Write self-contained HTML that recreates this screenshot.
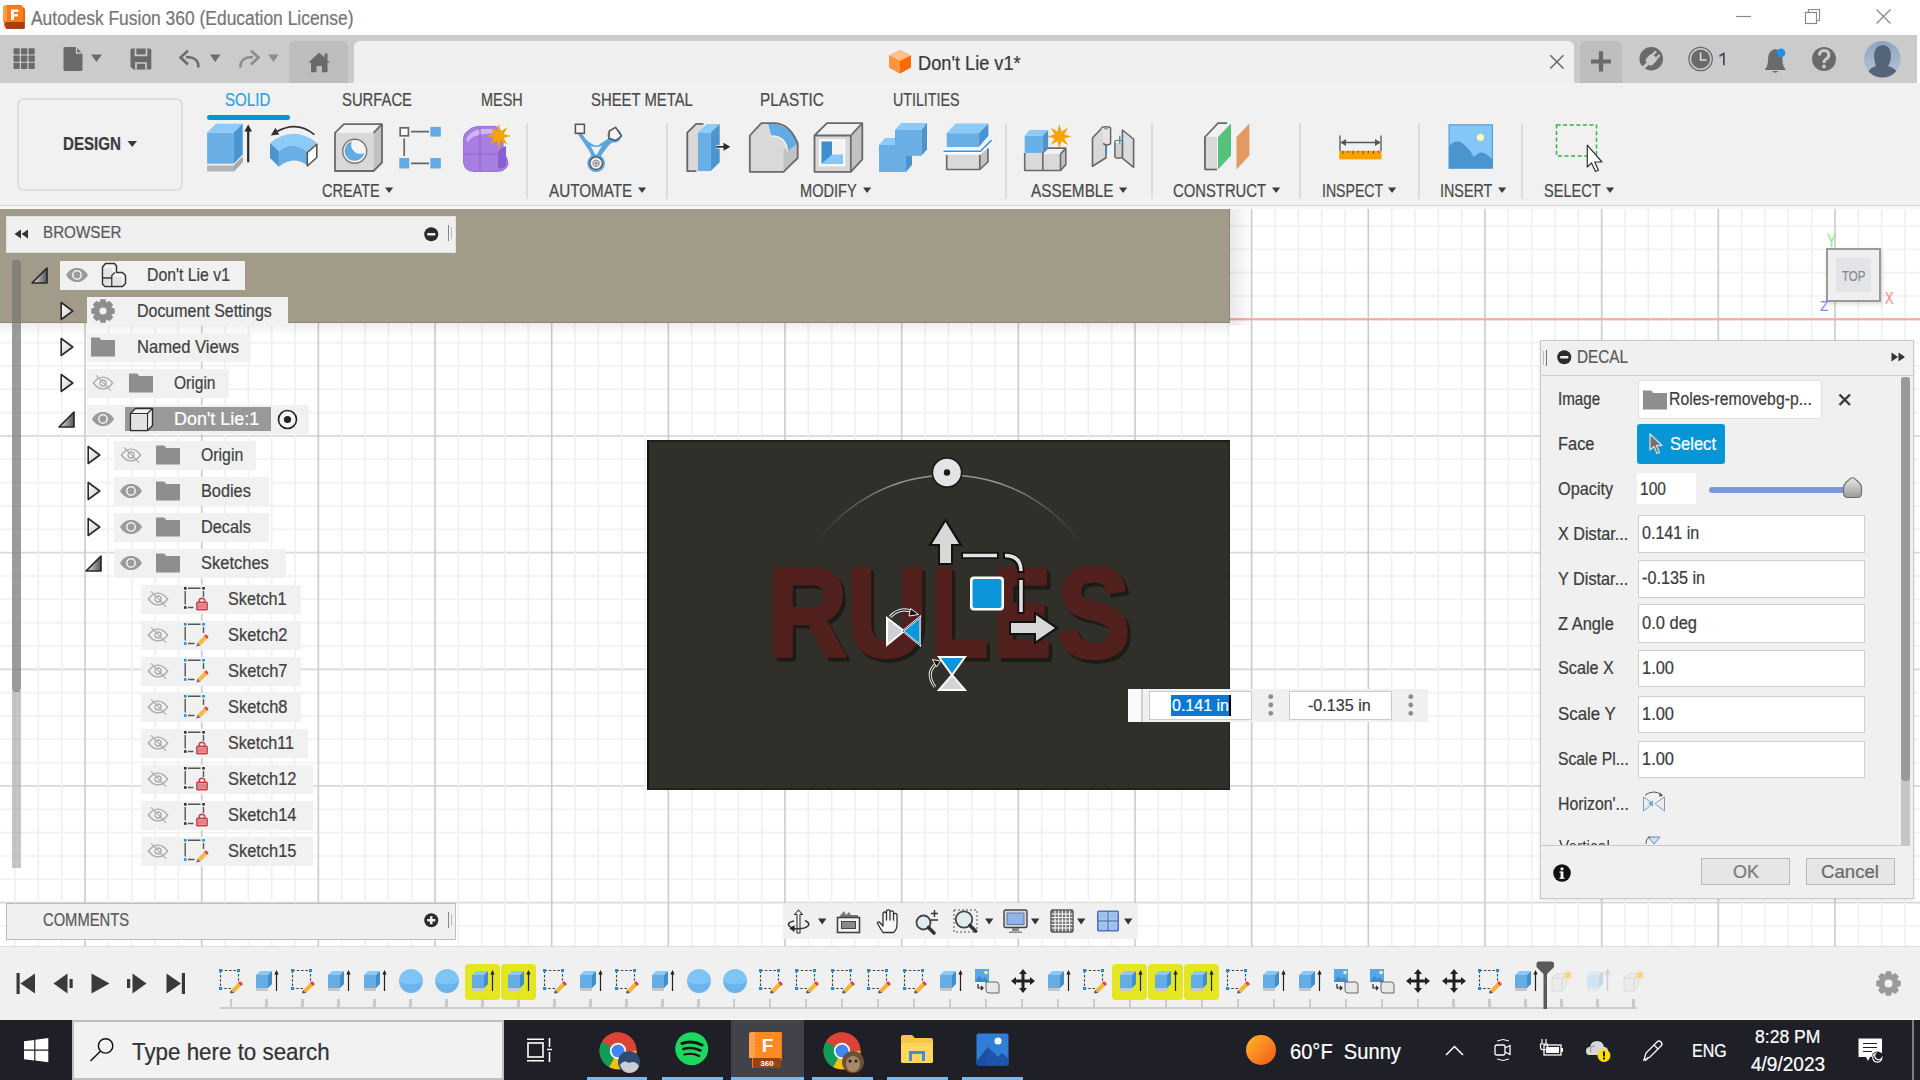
<!DOCTYPE html><html><head><meta charset="utf-8"><style>
html,body{margin:0;padding:0}
body{width:1920px;height:1080px;position:relative;overflow:hidden;background:#fff;font-family:"Liberation Sans",sans-serif}
div{box-sizing:border-box}
svg{overflow:visible}
</style></head><body>
<div style="position:absolute;left:0px;top:0px;width:1920px;height:35px;background:#fff"></div>
<svg style="position:absolute;left:30.50px;top:5.67px;overflow:visible" width="323.5" height="25.1"><text x="0" y="19.331395348837212" font-size="19.331395348837212" fill="#767676" stroke="#767676" stroke-width="0.22" font-weight="400" textLength="322.5" lengthAdjust="spacingAndGlyphs" style="">Autodesk Fusion 360 (Education License)</text></svg>
<svg style="position:absolute;left:1731px;top:10px;" width="30" height="20" viewBox="0 0 30 20"><line x1="5" y1="6.5" x2="20" y2="6.5" stroke="#8a8a8a" stroke-width="1.2"/></svg>
<svg style="position:absolute;left:1800px;top:6px;" width="30" height="25" viewBox="0 0 30 25"><rect x="5.5" y="6.5" width="11" height="11" fill="none" stroke="#8a8a8a" stroke-width="1.2"/><path d="M8.5 6.5V3.5H19.5V14.5H16.5" fill="none" stroke="#8a8a8a" stroke-width="1.2"/></svg>
<svg style="position:absolute;left:1871px;top:6px;" width="30" height="25" viewBox="0 0 30 25"><path d="M5.5 3.5L19.5 17.5M19.5 3.5L5.5 17.5" stroke="#8a8a8a" stroke-width="1.3"/></svg>
<div style="position:absolute;left:0px;top:35px;width:1917px;height:48px;background:#cbcbcb"></div>
<div style="position:absolute;left:1917px;top:35px;width:3px;height:48px;background:#fff"></div>
<div style="position:absolute;left:289px;top:41px;width:59px;height:42px;background:#bdbdbd;border-radius:6px 6px 0 0"></div>
<div style="position:absolute;left:354px;top:41px;width:1220px;height:42px;background:#f0f0f0;border-radius:6px 6px 0 0"></div>
<div style="position:absolute;left:1580px;top:41px;width:42px;height:42px;background:#bdbdbd;border-radius:6px 6px 0 0"></div>
<svg style="position:absolute;left:917.80px;top:49.93px;overflow:visible" width="103.7" height="25.7"><text x="0" y="19.76744186046512" font-size="19.76744186046512" fill="#3a3a3a" stroke="#3a3a3a" stroke-width="0.22" font-weight="400" textLength="102.7" lengthAdjust="spacingAndGlyphs" style="">Don't Lie v1*</text></svg>
<div style="position:absolute;left:0px;top:83px;width:1920px;height:122px;background:#f1f1f1"></div>
<div style="position:absolute;left:0px;top:205px;width:1920px;height:1px;background:#dadada"></div>
<div style="position:absolute;left:0px;top:206px;width:1920px;height:3px;background:#f7f7f7"></div>
<div style="position:absolute;left:17px;top:98px;width:166px;height:93px;border:2px solid #dedede;border-radius:7px"></div>
<svg style="position:absolute;left:62.50px;top:132.29px;overflow:visible" width="59.0" height="23.8"><text x="0" y="18.313953488372086" font-size="18.313953488372086" fill="#3c3c3c" stroke="#3c3c3c" stroke-width="0.22" font-weight="700" textLength="58.0" lengthAdjust="spacingAndGlyphs" style="">DESIGN</text></svg>
<svg style="position:absolute;left:127px;top:140px;" width="12" height="10" viewBox="0 0 12 10"><path d="M0.5 1H10L5.25 7z" fill="#3c3c3c"/></svg>
<svg style="position:absolute;left:225.20px;top:87.58px;overflow:visible" width="46.3" height="23.4"><text x="0" y="18.023255813953476" font-size="18.023255813953476" fill="#2da1dd" stroke="#2da1dd" stroke-width="0.22" font-weight="400" textLength="45.3" lengthAdjust="spacingAndGlyphs" style="">SOLID</text></svg>
<svg style="position:absolute;left:342.10px;top:87.58px;overflow:visible" width="71.0" height="23.4"><text x="0" y="18.023255813953476" font-size="18.023255813953476" fill="#4a4a4a" stroke="#4a4a4a" stroke-width="0.22" font-weight="400" textLength="70.0" lengthAdjust="spacingAndGlyphs" style="">SURFACE</text></svg>
<svg style="position:absolute;left:481.10px;top:87.58px;overflow:visible" width="42.7" height="23.4"><text x="0" y="18.023255813953476" font-size="18.023255813953476" fill="#4a4a4a" stroke="#4a4a4a" stroke-width="0.22" font-weight="400" textLength="41.7" lengthAdjust="spacingAndGlyphs" style="">MESH</text></svg>
<svg style="position:absolute;left:590.90px;top:87.58px;overflow:visible" width="102.9" height="23.4"><text x="0" y="18.023255813953476" font-size="18.023255813953476" fill="#4a4a4a" stroke="#4a4a4a" stroke-width="0.22" font-weight="400" textLength="101.9" lengthAdjust="spacingAndGlyphs" style="">SHEET METAL</text></svg>
<svg style="position:absolute;left:760.00px;top:87.58px;overflow:visible" width="64.8" height="23.4"><text x="0" y="18.023255813953476" font-size="18.023255813953476" fill="#4a4a4a" stroke="#4a4a4a" stroke-width="0.22" font-weight="400" textLength="63.8" lengthAdjust="spacingAndGlyphs" style="">PLASTIC</text></svg>
<svg style="position:absolute;left:892.50px;top:87.58px;overflow:visible" width="67.5" height="23.4"><text x="0" y="18.023255813953476" font-size="18.023255813953476" fill="#4a4a4a" stroke="#4a4a4a" stroke-width="0.22" font-weight="400" textLength="66.5" lengthAdjust="spacingAndGlyphs" style="">UTILITIES</text></svg>
<div style="position:absolute;left:207px;top:115px;width:83px;height:5px;background:#0696d7;border-radius:3px"></div>
<svg style="position:absolute;left:321.70px;top:179.56px;overflow:visible" width="58.7" height="22.7"><text x="0" y="17.44186046511628" font-size="17.44186046511628" fill="#4a4a4a" stroke="#4a4a4a" stroke-width="0.22" font-weight="400" textLength="57.7" lengthAdjust="spacingAndGlyphs" style="">CREATE</text></svg>
<svg style="position:absolute;left:385px;top:186.5px;" width="9" height="7" viewBox="0 0 9 7"><path d="M0 0.5H8.2L4.1 6z" fill="#3c3c3c"/></svg>
<svg style="position:absolute;left:549.20px;top:179.56px;overflow:visible" width="84.3" height="22.7"><text x="0" y="17.44186046511628" font-size="17.44186046511628" fill="#4a4a4a" stroke="#4a4a4a" stroke-width="0.22" font-weight="400" textLength="83.3" lengthAdjust="spacingAndGlyphs" style="">AUTOMATE</text></svg>
<svg style="position:absolute;left:638px;top:186.5px;" width="9" height="7" viewBox="0 0 9 7"><path d="M0 0.5H8.2L4.1 6z" fill="#3c3c3c"/></svg>
<svg style="position:absolute;left:799.80px;top:179.56px;overflow:visible" width="57.7" height="22.7"><text x="0" y="17.44186046511628" font-size="17.44186046511628" fill="#4a4a4a" stroke="#4a4a4a" stroke-width="0.22" font-weight="400" textLength="56.7" lengthAdjust="spacingAndGlyphs" style="">MODIFY</text></svg>
<svg style="position:absolute;left:863px;top:186.5px;" width="9" height="7" viewBox="0 0 9 7"><path d="M0 0.5H8.2L4.1 6z" fill="#3c3c3c"/></svg>
<svg style="position:absolute;left:1030.50px;top:179.56px;overflow:visible" width="83.6" height="22.7"><text x="0" y="17.44186046511628" font-size="17.44186046511628" fill="#4a4a4a" stroke="#4a4a4a" stroke-width="0.22" font-weight="400" textLength="82.6" lengthAdjust="spacingAndGlyphs" style="">ASSEMBLE</text></svg>
<svg style="position:absolute;left:1118.8px;top:186.5px;" width="9" height="7" viewBox="0 0 9 7"><path d="M0 0.5H8.2L4.1 6z" fill="#3c3c3c"/></svg>
<svg style="position:absolute;left:1172.80px;top:179.56px;overflow:visible" width="94.1" height="22.7"><text x="0" y="17.44186046511628" font-size="17.44186046511628" fill="#4a4a4a" stroke="#4a4a4a" stroke-width="0.22" font-weight="400" textLength="93.1" lengthAdjust="spacingAndGlyphs" style="">CONSTRUCT</text></svg>
<svg style="position:absolute;left:1271.6px;top:186.5px;" width="9" height="7" viewBox="0 0 9 7"><path d="M0 0.5H8.2L4.1 6z" fill="#3c3c3c"/></svg>
<svg style="position:absolute;left:1321.50px;top:179.56px;overflow:visible" width="62.2" height="22.7"><text x="0" y="17.44186046511628" font-size="17.44186046511628" fill="#4a4a4a" stroke="#4a4a4a" stroke-width="0.22" font-weight="400" textLength="61.2" lengthAdjust="spacingAndGlyphs" style="">INSPECT</text></svg>
<svg style="position:absolute;left:1388.4px;top:186.5px;" width="9" height="7" viewBox="0 0 9 7"><path d="M0 0.5H8.2L4.1 6z" fill="#3c3c3c"/></svg>
<svg style="position:absolute;left:1439.90px;top:179.56px;overflow:visible" width="53.3" height="22.7"><text x="0" y="17.44186046511628" font-size="17.44186046511628" fill="#4a4a4a" stroke="#4a4a4a" stroke-width="0.22" font-weight="400" textLength="52.3" lengthAdjust="spacingAndGlyphs" style="">INSERT</text></svg>
<svg style="position:absolute;left:1498px;top:186.5px;" width="9" height="7" viewBox="0 0 9 7"><path d="M0 0.5H8.2L4.1 6z" fill="#3c3c3c"/></svg>
<svg style="position:absolute;left:1543.50px;top:179.56px;overflow:visible" width="57.7" height="22.7"><text x="0" y="17.44186046511628" font-size="17.44186046511628" fill="#4a4a4a" stroke="#4a4a4a" stroke-width="0.22" font-weight="400" textLength="56.7" lengthAdjust="spacingAndGlyphs" style="">SELECT</text></svg>
<svg style="position:absolute;left:1606px;top:186.5px;" width="9" height="7" viewBox="0 0 9 7"><path d="M0 0.5H8.2L4.1 6z" fill="#3c3c3c"/></svg>
<div style="position:absolute;left:525.7px;top:123px;width:2px;height:76px;background:#dcdcdc"></div>
<div style="position:absolute;left:666.1px;top:123px;width:2px;height:76px;background:#dcdcdc"></div>
<div style="position:absolute;left:1005.4px;top:123px;width:2px;height:76px;background:#dcdcdc"></div>
<div style="position:absolute;left:1151px;top:123px;width:2px;height:76px;background:#dcdcdc"></div>
<div style="position:absolute;left:1299.4px;top:123px;width:2px;height:76px;background:#dcdcdc"></div>
<div style="position:absolute;left:1417.9px;top:123px;width:2px;height:76px;background:#dcdcdc"></div>
<div style="position:absolute;left:1521.4px;top:123px;width:2px;height:76px;background:#dcdcdc"></div>
<svg width="0" height="0" style="position:absolute"><defs>
<symbol id="eye" viewBox="0 0 24 16"><path d="M1 8C4.5 2.5 8 1 12 1S19.5 2.5 23 8C19.5 13.5 16 15 12 15S4.5 13.5 1 8Z" fill="#9b9b9b"/><circle cx="12" cy="8" r="4.2" fill="none" stroke="#efefef" stroke-width="1.6"/><circle cx="12" cy="8" r="1.8" fill="#9b9b9b"/></symbol>
<symbol id="eyeoff" viewBox="0 0 24 18"><path d="M1.2 9C4.8 4 8.5 2.3 12 2.3S19.2 4 22.8 9C19.2 14 15.5 15.7 12 15.7S4.8 14 1.2 9Z" fill="none" stroke="#ababab" stroke-width="1.5"/><circle cx="12" cy="9" r="3.4" fill="none" stroke="#ababab" stroke-width="1.5"/><path d="M4.2 0.5L21 17.5" stroke="#ababab" stroke-width="1.3"/></symbol>
<symbol id="folder" viewBox="0 0 24 20"><path d="M0 2.5H8V0.5H0Z M0 4H24V19.5H0Z" fill="#8e8e8e"/><path d="M0 1H9L10 3H24V4H0Z" fill="#8e8e8e"/></symbol>
<symbol id="tri_r" viewBox="0 0 14 20"><defs><linearGradient id="gtr" x1="0" y1="0" x2="1" y2="1"><stop offset="0" stop-color="#fff"/><stop offset="1" stop-color="#c8c8c8"/></linearGradient></defs><path d="M1.2 1.5L12.8 10L1.2 18.5Z" fill="url(#gtr)" stroke="#2a2a2a" stroke-width="1.6" stroke-linejoin="round"/></symbol>
<symbol id="tri_d" viewBox="0 0 17 17"><defs><linearGradient id="gtd" x1="0" y1="0" x2="1" y2="0"><stop offset="0" stop-color="#e8e8e8"/><stop offset="1" stop-color="#555"/></linearGradient></defs><path d="M1 16L16 1V16Z" fill="url(#gtd)" stroke="#262626" stroke-width="1.6" stroke-linejoin="round"/></symbol>
<symbol id="sk_lock" viewBox="0 0 26 26"><path d="M5 2.2H17.5M2.2 5V18.5M5 21.5H10.5M20.5 5V11" fill="none" stroke="#555" stroke-width="1.4"/><rect x="1" y="1" width="2.6" height="2.6" fill="#333"/><rect x="19.2" y="1" width="2.6" height="2.6" fill="#333"/><rect x="1" y="20.2" width="2.6" height="2.6" fill="#333"/><path d="M16.3 16V14.6Q16.3 12.3 19 12.3Q21.7 12.3 21.7 14.6V16" fill="none" stroke="#d33c46" stroke-width="1.5"/><rect x="13.8" y="16.2" width="10.4" height="7.6" rx="0.8" fill="#e4949a" stroke="#d33c46" stroke-width="1.4"/><path d="M15 19H23M15 21H23" stroke="#d9636b" stroke-width="0.7"/></symbol>
<symbol id="sk_pen" viewBox="0 0 26 26"><path d="M5 2.2H17.5M2.2 5V18.5M5 21.5H11.5M20.5 5V11" fill="none" stroke="#555" stroke-width="1.4"/><rect x="1" y="1" width="2.6" height="2.6" fill="#1a8fe3"/><rect x="19.2" y="1" width="2.6" height="2.6" fill="#1a8fe3"/><rect x="1" y="20.2" width="2.6" height="2.6" fill="#1a8fe3"/><path d="M14.5 20.5L21 14L24 17L17.5 23.5Z" fill="#f4be45"/><path d="M21 14L22 13Q23 12.2 24 13L25 14Q25.8 15 25 16L24 17Z" fill="#ea4a4a"/><path d="M14.5 20.5L13.2 24.8L17.5 23.5Z" fill="#777"/></symbol>
</defs></svg>
<svg style="position:absolute;left:0;top:0" width="1920" height="1080"><rect x="0" y="209" width="1920" height="737" fill="#fff"/><line x1="0" y1="225.97" x2="1920" y2="225.97" stroke="#f1f1f1" stroke-width="1.6"/><line x1="0" y1="249.30" x2="1920" y2="249.30" stroke="#f1f1f1" stroke-width="1.6"/><line x1="0" y1="272.63" x2="1920" y2="272.63" stroke="#f1f1f1" stroke-width="1.6"/><line x1="0" y1="295.97" x2="1920" y2="295.97" stroke="#f1f1f1" stroke-width="1.6"/><line x1="0" y1="319.30" x2="1920" y2="319.30" stroke="#d9d9d9" stroke-width="1.8"/><line x1="0" y1="342.63" x2="1920" y2="342.63" stroke="#f1f1f1" stroke-width="1.6"/><line x1="0" y1="365.97" x2="1920" y2="365.97" stroke="#f1f1f1" stroke-width="1.6"/><line x1="0" y1="389.30" x2="1920" y2="389.30" stroke="#f1f1f1" stroke-width="1.6"/><line x1="0" y1="412.63" x2="1920" y2="412.63" stroke="#f1f1f1" stroke-width="1.6"/><line x1="0" y1="435.97" x2="1920" y2="435.97" stroke="#d9d9d9" stroke-width="1.8"/><line x1="0" y1="459.30" x2="1920" y2="459.30" stroke="#f1f1f1" stroke-width="1.6"/><line x1="0" y1="482.63" x2="1920" y2="482.63" stroke="#f1f1f1" stroke-width="1.6"/><line x1="0" y1="505.96" x2="1920" y2="505.96" stroke="#f1f1f1" stroke-width="1.6"/><line x1="0" y1="529.30" x2="1920" y2="529.30" stroke="#f1f1f1" stroke-width="1.6"/><line x1="0" y1="552.63" x2="1920" y2="552.63" stroke="#d9d9d9" stroke-width="1.8"/><line x1="0" y1="575.96" x2="1920" y2="575.96" stroke="#f1f1f1" stroke-width="1.6"/><line x1="0" y1="599.30" x2="1920" y2="599.30" stroke="#f1f1f1" stroke-width="1.6"/><line x1="0" y1="622.63" x2="1920" y2="622.63" stroke="#f1f1f1" stroke-width="1.6"/><line x1="0" y1="645.96" x2="1920" y2="645.96" stroke="#f1f1f1" stroke-width="1.6"/><line x1="0" y1="669.30" x2="1920" y2="669.30" stroke="#d9d9d9" stroke-width="1.8"/><line x1="0" y1="692.63" x2="1920" y2="692.63" stroke="#f1f1f1" stroke-width="1.6"/><line x1="0" y1="715.96" x2="1920" y2="715.96" stroke="#f1f1f1" stroke-width="1.6"/><line x1="0" y1="739.29" x2="1920" y2="739.29" stroke="#f1f1f1" stroke-width="1.6"/><line x1="0" y1="762.63" x2="1920" y2="762.63" stroke="#f1f1f1" stroke-width="1.6"/><line x1="0" y1="785.96" x2="1920" y2="785.96" stroke="#d9d9d9" stroke-width="1.8"/><line x1="0" y1="809.29" x2="1920" y2="809.29" stroke="#f1f1f1" stroke-width="1.6"/><line x1="0" y1="832.63" x2="1920" y2="832.63" stroke="#f1f1f1" stroke-width="1.6"/><line x1="0" y1="855.96" x2="1920" y2="855.96" stroke="#f1f1f1" stroke-width="1.6"/><line x1="0" y1="879.29" x2="1920" y2="879.29" stroke="#f1f1f1" stroke-width="1.6"/><line x1="0" y1="902.62" x2="1920" y2="902.62" stroke="#d9d9d9" stroke-width="1.8"/><line x1="0" y1="925.96" x2="1920" y2="925.96" stroke="#f1f1f1" stroke-width="1.6"/><line x1="15.02" y1="209" x2="15.02" y2="946" stroke="#f0f0f0" stroke-width="1.6"/><line x1="38.35" y1="209" x2="38.35" y2="946" stroke="#f0f0f0" stroke-width="1.6"/><line x1="61.69" y1="209" x2="61.69" y2="946" stroke="#f0f0f0" stroke-width="1.6"/><line x1="85.02" y1="209" x2="85.02" y2="946" stroke="#cbcbcb" stroke-width="1.6"/><line x1="108.35" y1="209" x2="108.35" y2="946" stroke="#f0f0f0" stroke-width="1.6"/><line x1="131.69" y1="209" x2="131.69" y2="946" stroke="#f0f0f0" stroke-width="1.6"/><line x1="155.02" y1="209" x2="155.02" y2="946" stroke="#f0f0f0" stroke-width="1.6"/><line x1="178.35" y1="209" x2="178.35" y2="946" stroke="#f0f0f0" stroke-width="1.6"/><line x1="201.69" y1="209" x2="201.69" y2="946" stroke="#cbcbcb" stroke-width="1.6"/><line x1="225.02" y1="209" x2="225.02" y2="946" stroke="#f0f0f0" stroke-width="1.6"/><line x1="248.35" y1="209" x2="248.35" y2="946" stroke="#f0f0f0" stroke-width="1.6"/><line x1="271.68" y1="209" x2="271.68" y2="946" stroke="#f0f0f0" stroke-width="1.6"/><line x1="295.02" y1="209" x2="295.02" y2="946" stroke="#f0f0f0" stroke-width="1.6"/><line x1="318.35" y1="209" x2="318.35" y2="946" stroke="#cbcbcb" stroke-width="1.6"/><line x1="341.68" y1="209" x2="341.68" y2="946" stroke="#f0f0f0" stroke-width="1.6"/><line x1="365.02" y1="209" x2="365.02" y2="946" stroke="#f0f0f0" stroke-width="1.6"/><line x1="388.35" y1="209" x2="388.35" y2="946" stroke="#f0f0f0" stroke-width="1.6"/><line x1="411.68" y1="209" x2="411.68" y2="946" stroke="#f0f0f0" stroke-width="1.6"/><line x1="435.02" y1="209" x2="435.02" y2="946" stroke="#cbcbcb" stroke-width="1.6"/><line x1="458.35" y1="209" x2="458.35" y2="946" stroke="#f0f0f0" stroke-width="1.6"/><line x1="481.68" y1="209" x2="481.68" y2="946" stroke="#f0f0f0" stroke-width="1.6"/><line x1="505.01" y1="209" x2="505.01" y2="946" stroke="#f0f0f0" stroke-width="1.6"/><line x1="528.35" y1="209" x2="528.35" y2="946" stroke="#f0f0f0" stroke-width="1.6"/><line x1="551.68" y1="209" x2="551.68" y2="946" stroke="#cbcbcb" stroke-width="1.6"/><line x1="575.01" y1="209" x2="575.01" y2="946" stroke="#f0f0f0" stroke-width="1.6"/><line x1="598.35" y1="209" x2="598.35" y2="946" stroke="#f0f0f0" stroke-width="1.6"/><line x1="621.68" y1="209" x2="621.68" y2="946" stroke="#f0f0f0" stroke-width="1.6"/><line x1="645.01" y1="209" x2="645.01" y2="946" stroke="#f0f0f0" stroke-width="1.6"/><line x1="668.35" y1="209" x2="668.35" y2="946" stroke="#cbcbcb" stroke-width="1.6"/><line x1="691.68" y1="209" x2="691.68" y2="946" stroke="#f0f0f0" stroke-width="1.6"/><line x1="715.01" y1="209" x2="715.01" y2="946" stroke="#f0f0f0" stroke-width="1.6"/><line x1="738.34" y1="209" x2="738.34" y2="946" stroke="#f0f0f0" stroke-width="1.6"/><line x1="761.68" y1="209" x2="761.68" y2="946" stroke="#f0f0f0" stroke-width="1.6"/><line x1="785.01" y1="209" x2="785.01" y2="946" stroke="#cbcbcb" stroke-width="1.6"/><line x1="808.34" y1="209" x2="808.34" y2="946" stroke="#f0f0f0" stroke-width="1.6"/><line x1="831.68" y1="209" x2="831.68" y2="946" stroke="#f0f0f0" stroke-width="1.6"/><line x1="855.01" y1="209" x2="855.01" y2="946" stroke="#f0f0f0" stroke-width="1.6"/><line x1="878.34" y1="209" x2="878.34" y2="946" stroke="#f0f0f0" stroke-width="1.6"/><line x1="901.68" y1="209" x2="901.68" y2="946" stroke="#cbcbcb" stroke-width="1.6"/><line x1="925.01" y1="209" x2="925.01" y2="946" stroke="#f0f0f0" stroke-width="1.6"/><line x1="948.34" y1="209" x2="948.34" y2="946" stroke="#f0f0f0" stroke-width="1.6"/><line x1="971.67" y1="209" x2="971.67" y2="946" stroke="#f0f0f0" stroke-width="1.6"/><line x1="995.01" y1="209" x2="995.01" y2="946" stroke="#f0f0f0" stroke-width="1.6"/><line x1="1018.34" y1="209" x2="1018.34" y2="946" stroke="#cbcbcb" stroke-width="1.6"/><line x1="1041.67" y1="209" x2="1041.67" y2="946" stroke="#f0f0f0" stroke-width="1.6"/><line x1="1065.01" y1="209" x2="1065.01" y2="946" stroke="#f0f0f0" stroke-width="1.6"/><line x1="1088.34" y1="209" x2="1088.34" y2="946" stroke="#f0f0f0" stroke-width="1.6"/><line x1="1111.67" y1="209" x2="1111.67" y2="946" stroke="#f0f0f0" stroke-width="1.6"/><line x1="1135.01" y1="209" x2="1135.01" y2="946" stroke="#cbcbcb" stroke-width="1.6"/><line x1="1158.34" y1="209" x2="1158.34" y2="946" stroke="#f0f0f0" stroke-width="1.6"/><line x1="1181.67" y1="209" x2="1181.67" y2="946" stroke="#f0f0f0" stroke-width="1.6"/><line x1="1205.00" y1="209" x2="1205.00" y2="946" stroke="#f0f0f0" stroke-width="1.6"/><line x1="1228.34" y1="209" x2="1228.34" y2="946" stroke="#f0f0f0" stroke-width="1.6"/><line x1="1251.67" y1="209" x2="1251.67" y2="946" stroke="#cbcbcb" stroke-width="1.6"/><line x1="1275.00" y1="209" x2="1275.00" y2="946" stroke="#f0f0f0" stroke-width="1.6"/><line x1="1298.34" y1="209" x2="1298.34" y2="946" stroke="#f0f0f0" stroke-width="1.6"/><line x1="1321.67" y1="209" x2="1321.67" y2="946" stroke="#f0f0f0" stroke-width="1.6"/><line x1="1345.00" y1="209" x2="1345.00" y2="946" stroke="#f0f0f0" stroke-width="1.6"/><line x1="1368.34" y1="209" x2="1368.34" y2="946" stroke="#cbcbcb" stroke-width="1.6"/><line x1="1391.67" y1="209" x2="1391.67" y2="946" stroke="#f0f0f0" stroke-width="1.6"/><line x1="1415.00" y1="209" x2="1415.00" y2="946" stroke="#f0f0f0" stroke-width="1.6"/><line x1="1438.33" y1="209" x2="1438.33" y2="946" stroke="#f0f0f0" stroke-width="1.6"/><line x1="1461.67" y1="209" x2="1461.67" y2="946" stroke="#f0f0f0" stroke-width="1.6"/><line x1="1485.00" y1="209" x2="1485.00" y2="946" stroke="#cbcbcb" stroke-width="1.6"/><line x1="1508.33" y1="209" x2="1508.33" y2="946" stroke="#f0f0f0" stroke-width="1.6"/><line x1="1531.67" y1="209" x2="1531.67" y2="946" stroke="#f0f0f0" stroke-width="1.6"/><line x1="1555.00" y1="209" x2="1555.00" y2="946" stroke="#f0f0f0" stroke-width="1.6"/><line x1="1578.33" y1="209" x2="1578.33" y2="946" stroke="#f0f0f0" stroke-width="1.6"/><line x1="1601.66" y1="209" x2="1601.66" y2="946" stroke="#cbcbcb" stroke-width="1.6"/><line x1="1625.00" y1="209" x2="1625.00" y2="946" stroke="#f0f0f0" stroke-width="1.6"/><line x1="1648.33" y1="209" x2="1648.33" y2="946" stroke="#f0f0f0" stroke-width="1.6"/><line x1="1671.66" y1="209" x2="1671.66" y2="946" stroke="#f0f0f0" stroke-width="1.6"/><line x1="1695.00" y1="209" x2="1695.00" y2="946" stroke="#f0f0f0" stroke-width="1.6"/><line x1="1718.33" y1="209" x2="1718.33" y2="946" stroke="#cbcbcb" stroke-width="1.6"/><line x1="1741.66" y1="209" x2="1741.66" y2="946" stroke="#f0f0f0" stroke-width="1.6"/><line x1="1765.00" y1="209" x2="1765.00" y2="946" stroke="#f0f0f0" stroke-width="1.6"/><line x1="1788.33" y1="209" x2="1788.33" y2="946" stroke="#f0f0f0" stroke-width="1.6"/><line x1="1811.66" y1="209" x2="1811.66" y2="946" stroke="#f0f0f0" stroke-width="1.6"/><line x1="1834.99" y1="209" x2="1834.99" y2="946" stroke="#cbcbcb" stroke-width="1.6"/><line x1="1858.33" y1="209" x2="1858.33" y2="946" stroke="#f0f0f0" stroke-width="1.6"/><line x1="1881.66" y1="209" x2="1881.66" y2="946" stroke="#f0f0f0" stroke-width="1.6"/><line x1="1904.99" y1="209" x2="1904.99" y2="946" stroke="#f0f0f0" stroke-width="1.6"/><line x1="1230" y1="319.3" x2="1920" y2="319.3" stroke="#ffa3a3" stroke-width="2"/></svg>
<div style="position:absolute;left:1230px;top:209px;width:22px;height:116px;background:linear-gradient(90deg,rgba(0,0,0,0.09),rgba(0,0,0,0))"></div>
<div style="position:absolute;left:0px;top:322px;width:1230px;height:14px;background:linear-gradient(180deg,rgba(0,0,0,0.07),rgba(0,0,0,0))"></div>
<div style="position:absolute;left:0px;top:209px;width:1230px;height:113.5px;background:#a29b8a;border-right:1px solid #8c8677;border-bottom:1px solid #8c8677"></div>
<div style="position:absolute;left:646.5px;top:440px;width:583.5px;height:350px;background:#312f2a;border-left:2px solid #151412;border-top:2px solid #1f1e1b;border-right:1px solid #22211d;border-bottom:2px solid #22211d"></div>
<div style="position:absolute;left:6px;top:215.5px;width:450px;height:37px;background:#f0f0f0;border:1px solid #e2e2e2"></div>
<svg style="position:absolute;left:13.5px;top:229px;" width="16" height="11" viewBox="0 0 16 11"><path d="M0.5 5L7 0.5V9.5Z M7.5 5L14 0.5V9.5Z" fill="#333"/></svg>
<svg style="position:absolute;left:43.25px;top:222.40px;overflow:visible" width="79.5" height="21.3"><text x="0" y="16.351744186046513" font-size="16.351744186046513" fill="#5a5a5a" stroke="#5a5a5a" stroke-width="0.22" font-weight="400" textLength="78.5" lengthAdjust="spacingAndGlyphs" style="">BROWSER</text></svg>
<svg style="position:absolute;left:423.5px;top:226.5px;" width="15" height="15" viewBox="0 0 15 15"><circle cx="7.25" cy="7.25" r="7" fill="#2b2b2b"/><rect x="3.2" y="6" width="8.1" height="2.5" fill="#f0f0f0"/></svg>
<svg style="position:absolute;left:447px;top:224px;" width="8" height="18" viewBox="0 0 8 18"><line x1="1.5" y1="1" x2="1.5" y2="17" stroke="#888" stroke-width="1"/><line x1="4.5" y1="3" x2="4.5" y2="15" stroke="#bbb" stroke-width="1"/></svg>
<div style="position:absolute;left:12.3px;top:691px;width:8.4px;height:177px;background:rgba(160,160,160,0.6)"></div>
<div style="position:absolute;left:12.3px;top:260px;width:8.4px;height:432px;background:rgba(118,118,118,0.72);border-radius:4px"></div>
<div style="position:absolute;left:60px;top:260.5px;width:184.5px;height:29.5px;background:#f1f1f1"></div>
<svg style="position:absolute;left:31px;top:266.5px" width="17" height="17"><use href="#tri_d" width="17" height="17"/></svg>
<svg style="position:absolute;left:64.5px;top:267.0px" width="24" height="16"><use href="#eye" width="24" height="16"/></svg>
<svg style="position:absolute;left:101px;top:262px;" width="27" height="27" viewBox="0 0 27 27"><path d="M1.5 5L4.5 1.5H13.5L15.5 4V10.5H21.5L24.5 13.5V21.5L21.5 24.5H4L1.5 22Z" fill="#f4f4f6" stroke="#333" stroke-width="1.5" stroke-linejoin="round"/><rect x="3" y="6" width="8" height="9" fill="#e2e3e8"/><rect x="3" y="17" width="7.5" height="6" fill="#e2e3e8"/><rect x="12.5" y="15" width="8.5" height="8" fill="#e2e3e8"/><path d="M10.8 24.5V13.5L13.8 10.5M1.5 16H10.8" fill="none" stroke="#333" stroke-width="1.3"/></svg>
<svg style="position:absolute;left:147.00px;top:263.56px;overflow:visible" width="84.0" height="22.7"><text x="0" y="17.44186046511628" font-size="17.44186046511628" fill="#424242" stroke="#424242" stroke-width="0.22" font-weight="400" textLength="83.0" lengthAdjust="spacingAndGlyphs" style="">Don't Lie v1</text></svg>
<div style="position:absolute;left:87px;top:296.5px;width:200.5px;height:29.5px;background:#f1f1f1"></div>
<svg style="position:absolute;left:60px;top:301px" width="14" height="20"><use href="#tri_r" width="14" height="20"/></svg>
<svg style="position:absolute;left:91px;top:299px;" width="24" height="24" viewBox="0 0 24 24"><path d="M23.71 9.38 L23.71 14.62 L19.65 15.70 L20.03 14.80 L22.13 18.43 L18.43 22.13 L14.80 20.03 L15.70 19.65 L14.62 23.71 L9.38 23.71 L8.30 19.65 L9.20 20.03 L5.57 22.13 L1.87 18.43 L3.97 14.80 L4.35 15.70 L0.29 14.62 L0.29 9.38 L4.35 8.30 L3.97 9.20 L1.87 5.57 L5.57 1.87 L9.20 3.97 L8.30 4.35 L9.38 0.29 L14.62 0.29 L15.70 4.35 L14.80 3.97 L18.43 1.87 L22.13 5.57 L20.03 9.20 L19.65 8.30Z" fill="#8e8e8e"/><circle cx="12" cy="12" r="3.6" fill="#efefef"/></svg>
<svg style="position:absolute;left:136.50px;top:299.56px;overflow:visible" width="135.8" height="22.7"><text x="0" y="17.44186046511628" font-size="17.44186046511628" fill="#424242" stroke="#424242" stroke-width="0.22" font-weight="400" textLength="134.8" lengthAdjust="spacingAndGlyphs" style="">Document Settings</text></svg>
<div style="position:absolute;left:87px;top:332.5px;width:164.25px;height:29.5px;background:#f1f1f1"></div>
<svg style="position:absolute;left:60px;top:337px" width="14" height="20"><use href="#tri_r" width="14" height="20"/></svg>
<svg style="position:absolute;left:91.25px;top:337.0px" width="24" height="20"><use href="#folder" width="24" height="20"/></svg>
<svg style="position:absolute;left:136.50px;top:335.56px;overflow:visible" width="103.0" height="22.7"><text x="0" y="17.44186046511628" font-size="17.44186046511628" fill="#424242" stroke="#424242" stroke-width="0.22" font-weight="400" textLength="102.0" lengthAdjust="spacingAndGlyphs" style="">Named Views</text></svg>
<div style="position:absolute;left:87px;top:368.5px;width:141.75px;height:29.5px;background:#f1f1f1"></div>
<svg style="position:absolute;left:60px;top:373px" width="14" height="20"><use href="#tri_r" width="14" height="20"/></svg>
<svg style="position:absolute;left:91.25px;top:375.0px" width="24" height="16"><use href="#eyeoff" width="24" height="16"/></svg>
<svg style="position:absolute;left:128.75px;top:373.0px" width="24" height="20"><use href="#folder" width="24" height="20"/></svg>
<svg style="position:absolute;left:174.00px;top:371.56px;overflow:visible" width="42.5" height="22.7"><text x="0" y="17.44186046511628" font-size="17.44186046511628" fill="#424242" stroke="#424242" stroke-width="0.22" font-weight="400" textLength="41.5" lengthAdjust="spacingAndGlyphs" style="">Origin</text></svg>
<div style="position:absolute;left:87px;top:404.5px;width:221.75px;height:29.5px;background:#f1f1f1"></div>
<svg style="position:absolute;left:58px;top:410.5px" width="17" height="17"><use href="#tri_d" width="17" height="17"/></svg>
<svg style="position:absolute;left:91.25px;top:411.0px" width="24" height="16"><use href="#eye" width="24" height="16"/></svg>
<div style="position:absolute;left:124.5px;top:407px;width:146.75px;height:23.5px;background:#999"></div>
<svg style="position:absolute;left:128.75px;top:407px;" width="26" height="25" viewBox="0 0 26 25"><path d="M1.5 6.5L6.5 1.5H23.5V18.5L18.5 23.5H1.5Z" fill="#f2f2f2" stroke="#2e2e2e" stroke-width="1.4" stroke-linejoin="round"/><path d="M1.5 6.5H18.5V23.5M18.5 6.5L23.5 1.5" fill="none" stroke="#2e2e2e" stroke-width="1.2"/><path d="M2.5 7.5H17.5V22.5H2.5Z" fill="#e2e2e2"/></svg>
<svg style="position:absolute;left:174.00px;top:407.56px;overflow:visible" width="86.2" height="22.7"><text x="0" y="17.44186046511628" font-size="17.44186046511628" fill="#ffffff" stroke="#ffffff" stroke-width="0.22" font-weight="400" textLength="85.2" lengthAdjust="spacingAndGlyphs" style="">Don't Lie:1</text></svg>
<svg style="position:absolute;left:276.5px;top:409px;" width="21" height="21" viewBox="0 0 21 21"><circle cx="10.5" cy="10.5" r="9" fill="#f4f4f4" stroke="#222" stroke-width="1.6"/><circle cx="10.5" cy="10.5" r="3.6" fill="#222"/></svg>
<div style="position:absolute;left:113.75px;top:440.5px;width:142.5px;height:29.5px;background:#f1f1f1"></div>
<svg style="position:absolute;left:87px;top:445px" width="14" height="20"><use href="#tri_r" width="14" height="20"/></svg>
<svg style="position:absolute;left:118.75px;top:447.0px" width="24" height="16"><use href="#eyeoff" width="24" height="16"/></svg>
<svg style="position:absolute;left:155.5px;top:445.0px" width="24" height="20"><use href="#folder" width="24" height="20"/></svg>
<svg style="position:absolute;left:200.75px;top:443.56px;overflow:visible" width="43.2" height="22.7"><text x="0" y="17.44186046511628" font-size="17.44186046511628" fill="#424242" stroke="#424242" stroke-width="0.22" font-weight="400" textLength="42.2" lengthAdjust="spacingAndGlyphs" style="">Origin</text></svg>
<div style="position:absolute;left:113.75px;top:476.5px;width:155.0px;height:29.5px;background:#f1f1f1"></div>
<svg style="position:absolute;left:87px;top:481px" width="14" height="20"><use href="#tri_r" width="14" height="20"/></svg>
<svg style="position:absolute;left:118.75px;top:483.0px" width="24" height="16"><use href="#eye" width="24" height="16"/></svg>
<svg style="position:absolute;left:155.5px;top:481.0px" width="24" height="20"><use href="#folder" width="24" height="20"/></svg>
<svg style="position:absolute;left:200.75px;top:479.56px;overflow:visible" width="50.8" height="22.7"><text x="0" y="17.44186046511628" font-size="17.44186046511628" fill="#424242" stroke="#424242" stroke-width="0.22" font-weight="400" textLength="49.8" lengthAdjust="spacingAndGlyphs" style="">Bodies</text></svg>
<div style="position:absolute;left:113.75px;top:512.5px;width:155.0px;height:29.5px;background:#f1f1f1"></div>
<svg style="position:absolute;left:87px;top:517px" width="14" height="20"><use href="#tri_r" width="14" height="20"/></svg>
<svg style="position:absolute;left:118.75px;top:519.0px" width="24" height="16"><use href="#eye" width="24" height="16"/></svg>
<svg style="position:absolute;left:155.5px;top:517.0px" width="24" height="20"><use href="#folder" width="24" height="20"/></svg>
<svg style="position:absolute;left:200.75px;top:515.56px;overflow:visible" width="50.8" height="22.7"><text x="0" y="17.44186046511628" font-size="17.44186046511628" fill="#424242" stroke="#424242" stroke-width="0.22" font-weight="400" textLength="49.8" lengthAdjust="spacingAndGlyphs" style="">Decals</text></svg>
<div style="position:absolute;left:113.75px;top:548.5px;width:172.5px;height:29.5px;background:#f1f1f1"></div>
<svg style="position:absolute;left:85px;top:554.5px" width="17" height="17"><use href="#tri_d" width="17" height="17"/></svg>
<svg style="position:absolute;left:118.75px;top:555.0px" width="24" height="16"><use href="#eye" width="24" height="16"/></svg>
<svg style="position:absolute;left:155.5px;top:553.0px" width="24" height="20"><use href="#folder" width="24" height="20"/></svg>
<svg style="position:absolute;left:200.75px;top:551.56px;overflow:visible" width="68.8" height="22.7"><text x="0" y="17.44186046511628" font-size="17.44186046511628" fill="#424242" stroke="#424242" stroke-width="0.22" font-weight="400" textLength="67.8" lengthAdjust="spacingAndGlyphs" style="">Sketches</text></svg>
<div style="position:absolute;left:141.25px;top:584.5px;width:160.0px;height:29.5px;background:#f1f1f1"></div>
<svg style="position:absolute;left:146.25px;top:591.0px" width="24" height="16"><use href="#eyeoff" width="24" height="16"/></svg>
<svg style="position:absolute;left:182.5px;top:586.0px" width="26" height="26"><use href="#sk_lock" width="26" height="26"/></svg>
<svg style="position:absolute;left:227.50px;top:587.56px;overflow:visible" width="59.5" height="22.7"><text x="0" y="17.44186046511628" font-size="17.44186046511628" fill="#424242" stroke="#424242" stroke-width="0.22" font-weight="400" textLength="58.5" lengthAdjust="spacingAndGlyphs" style="">Sketch1</text></svg>
<div style="position:absolute;left:141.25px;top:620.5px;width:160.0px;height:29.5px;background:#f1f1f1"></div>
<svg style="position:absolute;left:146.25px;top:627.0px" width="24" height="16"><use href="#eyeoff" width="24" height="16"/></svg>
<svg style="position:absolute;left:182.5px;top:622.0px" width="26" height="26"><use href="#sk_pen" width="26" height="26"/></svg>
<svg style="position:absolute;left:227.50px;top:623.56px;overflow:visible" width="60.5" height="22.7"><text x="0" y="17.44186046511628" font-size="17.44186046511628" fill="#424242" stroke="#424242" stroke-width="0.22" font-weight="400" textLength="59.5" lengthAdjust="spacingAndGlyphs" style="">Sketch2</text></svg>
<div style="position:absolute;left:141.25px;top:656.5px;width:160.0px;height:29.5px;background:#f1f1f1"></div>
<svg style="position:absolute;left:146.25px;top:663.0px" width="24" height="16"><use href="#eyeoff" width="24" height="16"/></svg>
<svg style="position:absolute;left:182.5px;top:658.0px" width="26" height="26"><use href="#sk_pen" width="26" height="26"/></svg>
<svg style="position:absolute;left:227.50px;top:659.56px;overflow:visible" width="60.5" height="22.7"><text x="0" y="17.44186046511628" font-size="17.44186046511628" fill="#424242" stroke="#424242" stroke-width="0.22" font-weight="400" textLength="59.5" lengthAdjust="spacingAndGlyphs" style="">Sketch7</text></svg>
<div style="position:absolute;left:141.25px;top:692.5px;width:160.0px;height:29.5px;background:#f1f1f1"></div>
<svg style="position:absolute;left:146.25px;top:699.0px" width="24" height="16"><use href="#eyeoff" width="24" height="16"/></svg>
<svg style="position:absolute;left:182.5px;top:694.0px" width="26" height="26"><use href="#sk_pen" width="26" height="26"/></svg>
<svg style="position:absolute;left:227.50px;top:695.56px;overflow:visible" width="60.5" height="22.7"><text x="0" y="17.44186046511628" font-size="17.44186046511628" fill="#424242" stroke="#424242" stroke-width="0.22" font-weight="400" textLength="59.5" lengthAdjust="spacingAndGlyphs" style="">Sketch8</text></svg>
<div style="position:absolute;left:141.25px;top:728.5px;width:166.25px;height:29.5px;background:#f1f1f1"></div>
<svg style="position:absolute;left:146.25px;top:735.0px" width="24" height="16"><use href="#eyeoff" width="24" height="16"/></svg>
<svg style="position:absolute;left:182.5px;top:730.0px" width="26" height="26"><use href="#sk_lock" width="26" height="26"/></svg>
<svg style="position:absolute;left:227.50px;top:731.56px;overflow:visible" width="67.0" height="22.7"><text x="0" y="17.44186046511628" font-size="17.44186046511628" fill="#424242" stroke="#424242" stroke-width="0.22" font-weight="400" textLength="66.0" lengthAdjust="spacingAndGlyphs" style="">Sketch11</text></svg>
<div style="position:absolute;left:141.25px;top:764.5px;width:171.75px;height:29.5px;background:#f1f1f1"></div>
<svg style="position:absolute;left:146.25px;top:771.0px" width="24" height="16"><use href="#eyeoff" width="24" height="16"/></svg>
<svg style="position:absolute;left:182.5px;top:766.0px" width="26" height="26"><use href="#sk_lock" width="26" height="26"/></svg>
<svg style="position:absolute;left:227.50px;top:767.56px;overflow:visible" width="69.5" height="22.7"><text x="0" y="17.44186046511628" font-size="17.44186046511628" fill="#424242" stroke="#424242" stroke-width="0.22" font-weight="400" textLength="68.5" lengthAdjust="spacingAndGlyphs" style="">Sketch12</text></svg>
<div style="position:absolute;left:141.25px;top:800.5px;width:171.75px;height:29.5px;background:#f1f1f1"></div>
<svg style="position:absolute;left:146.25px;top:807.0px" width="24" height="16"><use href="#eyeoff" width="24" height="16"/></svg>
<svg style="position:absolute;left:182.5px;top:802.0px" width="26" height="26"><use href="#sk_lock" width="26" height="26"/></svg>
<svg style="position:absolute;left:227.50px;top:803.56px;overflow:visible" width="69.5" height="22.7"><text x="0" y="17.44186046511628" font-size="17.44186046511628" fill="#424242" stroke="#424242" stroke-width="0.22" font-weight="400" textLength="68.5" lengthAdjust="spacingAndGlyphs" style="">Sketch14</text></svg>
<div style="position:absolute;left:141.25px;top:836.5px;width:171.75px;height:29.5px;background:#f1f1f1"></div>
<svg style="position:absolute;left:146.25px;top:843.0px" width="24" height="16"><use href="#eyeoff" width="24" height="16"/></svg>
<svg style="position:absolute;left:182.5px;top:838.0px" width="26" height="26"><use href="#sk_pen" width="26" height="26"/></svg>
<svg style="position:absolute;left:227.50px;top:839.56px;overflow:visible" width="69.5" height="22.7"><text x="0" y="17.44186046511628" font-size="17.44186046511628" fill="#424242" stroke="#424242" stroke-width="0.22" font-weight="400" textLength="68.5" lengthAdjust="spacingAndGlyphs" style="">Sketch15</text></svg>
<div style="position:absolute;left:6px;top:902.5px;width:450px;height:37px;background:#f0f0f0;border:1px solid #bdbdbd"></div>
<svg style="position:absolute;left:43.25px;top:908.56px;overflow:visible" width="87.0" height="22.7"><text x="0" y="17.44186046511628" font-size="17.44186046511628" fill="#5a5a5a" stroke="#5a5a5a" stroke-width="0.22" font-weight="400" textLength="86.0" lengthAdjust="spacingAndGlyphs" style="">COMMENTS</text></svg>
<svg style="position:absolute;left:423.5px;top:913px;" width="15" height="15" viewBox="0 0 15 15"><circle cx="7.25" cy="7.25" r="7" fill="#2b2b2b"/><rect x="3.2" y="6" width="8.1" height="2.5" fill="#f0f0f0"/><rect x="6" y="3.2" width="2.5" height="8.1" fill="#f0f0f0"/></svg>
<svg style="position:absolute;left:447px;top:911px;" width="8" height="18" viewBox="0 0 8 18"><line x1="1.5" y1="1" x2="1.5" y2="17" stroke="#888" stroke-width="1"/><line x1="4.5" y1="3" x2="4.5" y2="15" stroke="#bbb" stroke-width="1"/></svg>
<svg style="position:absolute;left:0px;top:0px;left:0;top:0;pointer-events:none" width="1920" height="1080" viewBox="0 0 1920 1080"><defs><filter id="blur1" x="-10%" y="-10%" width="120%" height="120%"><feGaussianBlur stdDeviation="1"/></filter></defs><g transform="translate(3,3.5)"><path d="M1105 0 778 535H432V0H137V1409H841Q1093 1409 1230.0 1300.5Q1367 1192 1367 989Q1367 841 1283.0 733.5Q1199 626 1056 592L1437 0ZM1070 977Q1070 1180 810 1180H432V764H818Q942 764 1006.0 820.0Q1070 876 1070 977Z" transform="matrix(0.05331,0,0,-0.06160,768.20,655.90)" fill="#1f1c19" stroke="#1f1c19" stroke-width="67.5" stroke-linejoin="round" filter="url(#blur1)"/></g><g transform="translate(3,3.5)"><path d="M723 -20Q432 -20 277.5 122.0Q123 264 123 528V1409H418V551Q418 384 497.5 297.5Q577 211 731 211Q889 211 974.0 301.5Q1059 392 1059 561V1409H1354V543Q1354 275 1188.5 127.5Q1023 -20 723 -20Z" transform="matrix(0.05467,0,0,-0.06165,846.58,655.97)" fill="#1f1c19" stroke="#1f1c19" stroke-width="65.8" stroke-linejoin="round" filter="url(#blur1)"/></g><g transform="translate(3,3.5)"><path d="M137 0V1409H432V228H1188V0Z" transform="matrix(0.04586,0,0,-0.06160,930.62,655.90)" fill="#1f1c19" stroke="#1f1c19" stroke-width="78.5" stroke-linejoin="round" filter="url(#blur1)"/></g><g transform="translate(3,3.5)"><path d="M137 0V1409H1245V1181H432V827H1184V599H432V228H1286V0Z" transform="matrix(0.04169,0,0,-0.06125,993.69,655.90)" fill="#1f1c19" stroke="#1f1c19" stroke-width="86.4" stroke-linejoin="round" filter="url(#blur1)"/></g><g transform="translate(3,3.5)"><path d="M1286 406Q1286 199 1132.5 89.5Q979 -20 682 -20Q411 -20 257.0 76.0Q103 172 59 367L344 414Q373 302 457.0 251.5Q541 201 690 201Q999 201 999 389Q999 449 963.5 488.0Q928 527 863.5 553.0Q799 579 616 616Q458 653 396.0 675.5Q334 698 284.0 728.5Q234 759 199.0 802.0Q164 845 144.5 903.0Q125 961 125 1036Q125 1227 268.5 1328.5Q412 1430 686 1430Q948 1430 1079.5 1348.0Q1211 1266 1249 1077L963 1038Q941 1129 873.5 1175.0Q806 1221 680 1221Q412 1221 412 1053Q412 998 440.5 963.0Q469 928 525.0 903.5Q581 879 752 842Q955 799 1042.5 762.5Q1130 726 1181.0 677.5Q1232 629 1259.0 561.5Q1286 494 1286 406Z" transform="matrix(0.05330,0,0,-0.06248,1057.46,656.95)" fill="#1f1c19" stroke="#1f1c19" stroke-width="67.5" stroke-linejoin="round" filter="url(#blur1)"/></g><path d="M1105 0 778 535H432V0H137V1409H841Q1093 1409 1230.0 1300.5Q1367 1192 1367 989Q1367 841 1283.0 733.5Q1199 626 1056 592L1437 0ZM1070 977Q1070 1180 810 1180H432V764H818Q942 764 1006.0 820.0Q1070 876 1070 977Z" transform="matrix(0.05331,0,0,-0.06160,768.20,655.90)" fill="#52201d" stroke="#52201d" stroke-width="62.7" stroke-linejoin="round"/><path d="M723 -20Q432 -20 277.5 122.0Q123 264 123 528V1409H418V551Q418 384 497.5 297.5Q577 211 731 211Q889 211 974.0 301.5Q1059 392 1059 561V1409H1354V543Q1354 275 1188.5 127.5Q1023 -20 723 -20Z" transform="matrix(0.05467,0,0,-0.06165,846.58,655.97)" fill="#52201d" stroke="#52201d" stroke-width="61.9" stroke-linejoin="round"/><path d="M137 0V1409H432V228H1188V0Z" transform="matrix(0.04586,0,0,-0.06160,930.62,655.90)" fill="#52201d" stroke="#52201d" stroke-width="67.0" stroke-linejoin="round"/><path d="M137 0V1409H1245V1181H432V827H1184V599H432V228H1286V0Z" transform="matrix(0.04169,0,0,-0.06125,993.69,655.90)" fill="#52201d" stroke="#52201d" stroke-width="69.9" stroke-linejoin="round"/><path d="M1286 406Q1286 199 1132.5 89.5Q979 -20 682 -20Q411 -20 257.0 76.0Q103 172 59 367L344 414Q373 302 457.0 251.5Q541 201 690 201Q999 201 999 389Q999 449 963.5 488.0Q928 527 863.5 553.0Q799 579 616 616Q458 653 396.0 675.5Q334 698 284.0 728.5Q234 759 199.0 802.0Q164 845 144.5 903.0Q125 961 125 1036Q125 1227 268.5 1328.5Q412 1430 686 1430Q948 1430 1079.5 1348.0Q1211 1266 1249 1077L963 1038Q941 1129 873.5 1175.0Q806 1221 680 1221Q412 1221 412 1053Q412 998 440.5 963.0Q469 928 525.0 903.5Q581 879 752 842Q955 799 1042.5 762.5Q1130 726 1181.0 677.5Q1232 629 1259.0 561.5Q1286 494 1286 406Z" transform="matrix(0.05330,0,0,-0.06248,1057.46,656.95)" fill="#52201d" stroke="#52201d" stroke-width="62.2" stroke-linejoin="round"/></svg>
<svg style="position:absolute;left:0px;top:0px;left:0;top:0;pointer-events:none" width="1920" height="1080" viewBox="0 0 1920 1080">
<defs><linearGradient id="arcg" x1="819" y1="0" x2="1079" y2="0" gradientUnits="userSpaceOnUse"><stop offset="0" stop-color="#8d8a84" stop-opacity="0"/><stop offset="0.3" stop-color="#9a9790" stop-opacity="1"/><stop offset="0.7" stop-color="#9a9790" stop-opacity="1"/><stop offset="1" stop-color="#8d8a84" stop-opacity="0"/></linearGradient></defs>
<path d="M819 540 A162 162 0 0 1 1079 541" fill="none" stroke="url(#arcg)" stroke-width="1.5"/>
<circle cx="947" cy="472.5" r="15.5" fill="#1a1a1a"/><circle cx="947" cy="472.5" r="13.8" fill="#e4e4e4"/><circle cx="947" cy="472.5" r="3.2" fill="#1a1a1a"/>
<path d="M945.5 518 L963 546 L953 546 L953 565 L938 565 L938 546 L928 546 Z" fill="#111"/>
<path d="M945.5 522 L959 544 L951 544 L951 563 L940 563 L940 544 L932 544 Z" fill="#d8d8d8"/>
<path d="M961 555.5 H999 M1003 555.5 Q1021 555.5 1021 573 M1021 578 V614" fill="none" stroke="#111" stroke-width="7"/>
<path d="M963 555.5 H997 M1005 555.5 Q1021 555.5 1021 571 M1021 580 V612" fill="none" stroke="#e2e2e2" stroke-width="3.5"/>
<rect x="970" y="576.5" width="34" height="34" rx="4" fill="#fff"/><rect x="972.5" y="579" width="29" height="29" rx="2.5" fill="#0b95da"/>
<path d="M1009 621 H1034 V611 L1059 628 L1034 645 V635 H1009 Z" fill="#111"/>
<path d="M1011 623 H1036 V615 L1055 628 L1036 641 V633 H1011 Z" fill="#d8d8d8"/>
<path d="M887 618 L904 631 L887 645 Z" fill="#cfcfcf" stroke="#fff" stroke-width="2"/>
<path d="M920 617 L903 631 L920 645 Z" fill="#0b95da" stroke="#fff" stroke-width="2"/>
<path d="M920 617 L903 631 L920 645 Z" fill="none" stroke="#1b4e8a" stroke-width="0.8"/>
<path d="M890 617 Q900 606 913 612" fill="none" stroke="#f0f0f0" stroke-width="3"/><path d="M890 617 Q900 606 913 612" fill="none" stroke="#222" stroke-width="1.1"/><path d="M910.5 608.5 L918.5 614.5 L909 616Z" fill="#111" stroke="#f0f0f0" stroke-width="1"/>
<path d="M939 657 L965 657 L952 675 Z" fill="#0b95da" stroke="#fff" stroke-width="2"/>
<path d="M952 675 L939 690 L965 690 Z" fill="#d4d4d4" stroke="#fff" stroke-width="2"/>
<path d="M936 664 Q925 673 935 687" fill="none" stroke="#f0f0f0" stroke-width="3"/><path d="M936 664 Q925 673 935 687" fill="none" stroke="#222" stroke-width="1.1"/><path d="M932.5 659.5 L940.5 661 L936.5 667Z" fill="#111" stroke="#f0f0f0" stroke-width="1"/>
</svg>
<div style="position:absolute;left:1128px;top:689px;width:300px;height:33px;background:#f0f0f0"></div>
<div style="position:absolute;left:1128px;top:689px;width:15px;height:33px;background:#fafafa;border-right:2px solid #d0d0d0"></div>
<div style="position:absolute;left:1149px;top:690.8px;width:103px;height:29.5px;background:#fff;border:1px solid #c9c9c9"></div>
<div style="position:absolute;left:1171.3px;top:695px;width:58.5px;height:21px;background:#0a78d7"></div>
<div style="position:absolute;left:1229px;top:695px;width:2px;height:21px;background:#000"></div>
<svg style="position:absolute;left:1172.00px;top:695.01px;overflow:visible" width="58.0" height="20.8"><text x="0" y="15.988372093023257" font-size="15.988372093023257" fill="#ffffff" stroke="#ffffff" stroke-width="0.22" font-weight="400" textLength="57.0" lengthAdjust="spacingAndGlyphs" style="">0.141 in</text></svg>
<svg style="position:absolute;left:1266px;top:693px;" width="10" height="24" viewBox="0 0 10 24"><circle cx="4.8" cy="3.7" r="2.4" fill="#8d8d8d"/><circle cx="4.8" cy="12" r="2.4" fill="#8d8d8d"/><circle cx="4.8" cy="20.3" r="2.4" fill="#8d8d8d"/></svg>
<div style="position:absolute;left:1289px;top:690.8px;width:102.5px;height:29.5px;background:#fff;border:1px solid #c9c9c9"></div>
<svg style="position:absolute;left:1307.80px;top:695.01px;overflow:visible" width="63.7" height="20.8"><text x="0" y="15.988372093023257" font-size="15.988372093023257" fill="#3a3a3a" stroke="#3a3a3a" stroke-width="0.22" font-weight="400" textLength="62.7" lengthAdjust="spacingAndGlyphs" style="">-0.135 in</text></svg>
<svg style="position:absolute;left:1405.5px;top:693px;" width="10" height="24" viewBox="0 0 10 24"><circle cx="4.8" cy="3.7" r="2.4" fill="#8d8d8d"/><circle cx="4.8" cy="12" r="2.4" fill="#8d8d8d"/><circle cx="4.8" cy="20.3" r="2.4" fill="#8d8d8d"/></svg>
<div style="position:absolute;left:1825.8px;top:248.3px;width:55px;height:54.2px;background:#efefef;border:2px solid #9a9a9a;box-shadow:1px 2px 4px rgba(0,0,0,0.15)"></div>
<div style="position:absolute;left:1835.8px;top:258.3px;width:35px;height:34.2px;background:#e3e4e8"></div>
<svg style="position:absolute;left:1842.00px;top:266.27px;overflow:visible" width="24.5" height="18.9"><text x="0" y="14.534883720930234" font-size="14.534883720930234" fill="#8a8a8a" stroke="#8a8a8a" stroke-width="0.22" font-weight="400" textLength="23.5" lengthAdjust="spacingAndGlyphs" style="">TOP</text></svg>
<svg style="position:absolute;left:1826.50px;top:229.33px;overflow:visible" width="10.0" height="23.6"><text x="0" y="18.16860465116279" font-size="18.16860465116279" fill="#8ee88e" stroke="#8ee88e" stroke-width="0.22" font-weight="400" textLength="9.0" lengthAdjust="spacingAndGlyphs" style="">Y</text></svg>
<svg style="position:absolute;left:1819.50px;top:296.27px;overflow:visible" width="9.5" height="18.9"><text x="0" y="14.534883720930234" font-size="14.534883720930234" fill="#8c8cf5" stroke="#8c8cf5" stroke-width="0.22" font-weight="400" textLength="8.5" lengthAdjust="spacingAndGlyphs" style="">Z</text></svg>
<svg style="position:absolute;left:1884.50px;top:288.36px;overflow:visible" width="9.5" height="20.6"><text x="0" y="15.843023255813922" font-size="15.843023255813922" fill="#ff8a8a" stroke="#ff8a8a" stroke-width="0.22" font-weight="400" textLength="8.5" lengthAdjust="spacingAndGlyphs" style="">X</text></svg>
<div style="position:absolute;left:1539.5px;top:339.5px;width:374.5px;height:559px;background:#f0f0f0;border:1px solid #c8c8c8;box-shadow:0 1px 3px rgba(0,0,0,0.12)"></div>
<div style="position:absolute;left:1540px;top:375px;width:373px;height:1px;background:#cfcfcf"></div>
<svg style="position:absolute;left:1541.5px;top:350px;" width="8" height="16" viewBox="0 0 8 16"><line x1="1.5" y1="1" x2="1.5" y2="15" stroke="#bbb" stroke-width="1"/><line x1="4.5" y1="0" x2="4.5" y2="16" stroke="#777" stroke-width="1"/></svg>
<svg style="position:absolute;left:1556.5px;top:350.2px;" width="15" height="15" viewBox="0 0 15 15"><circle cx="7.25" cy="7.25" r="7" fill="#2b2b2b"/><rect x="3.2" y="6" width="8.1" height="2.5" fill="#f0f0f0"/></svg>
<svg style="position:absolute;left:1576.50px;top:345.81px;overflow:visible" width="52.0" height="22.7"><text x="0" y="17.44186046511628" font-size="17.44186046511628" fill="#5a5a5a" stroke="#5a5a5a" stroke-width="0.22" font-weight="400" textLength="51.0" lengthAdjust="spacingAndGlyphs" style="">DECAL</text></svg>
<svg style="position:absolute;left:1891px;top:352px;" width="16" height="11" viewBox="0 0 16 11"><path d="M0.5 0.5L7 5L0.5 9.5Z M7.5 0.5L14 5L7.5 9.5Z" fill="#333"/></svg>
<div style="position:absolute;left:1901.25px;top:376.5px;width:8.25px;height:469px;background:#c6c6c6"></div>
<div style="position:absolute;left:1901.25px;top:376.5px;width:8.25px;height:404.5px;background:#999;border-radius:4px"></div>
<svg style="position:absolute;left:1558.25px;top:388.06px;overflow:visible" width="43.2" height="22.7"><text x="0" y="17.44186046511628" font-size="17.44186046511628" fill="#3c3c3c" stroke="#3c3c3c" stroke-width="0.22" font-weight="400" textLength="42.2" lengthAdjust="spacingAndGlyphs" style="">Image</text></svg>
<svg style="position:absolute;left:1558.25px;top:433.06px;overflow:visible" width="37.5" height="22.7"><text x="0" y="17.44186046511628" font-size="17.44186046511628" fill="#3c3c3c" stroke="#3c3c3c" stroke-width="0.22" font-weight="400" textLength="36.5" lengthAdjust="spacingAndGlyphs" style="">Face</text></svg>
<svg style="position:absolute;left:1558.25px;top:478.06px;overflow:visible" width="56.2" height="22.7"><text x="0" y="17.44186046511628" font-size="17.44186046511628" fill="#3c3c3c" stroke="#3c3c3c" stroke-width="0.22" font-weight="400" textLength="55.2" lengthAdjust="spacingAndGlyphs" style="">Opacity</text></svg>
<svg style="position:absolute;left:1558.25px;top:523.06px;overflow:visible" width="71.2" height="22.7"><text x="0" y="17.44186046511628" font-size="17.44186046511628" fill="#3c3c3c" stroke="#3c3c3c" stroke-width="0.22" font-weight="400" textLength="70.2" lengthAdjust="spacingAndGlyphs" style="">X Distar...</text></svg>
<svg style="position:absolute;left:1558.25px;top:568.06px;overflow:visible" width="71.2" height="22.7"><text x="0" y="17.44186046511628" font-size="17.44186046511628" fill="#3c3c3c" stroke="#3c3c3c" stroke-width="0.22" font-weight="400" textLength="70.2" lengthAdjust="spacingAndGlyphs" style="">Y Distar...</text></svg>
<svg style="position:absolute;left:1558.25px;top:612.96px;overflow:visible" width="56.8" height="22.7"><text x="0" y="17.44186046511628" font-size="17.44186046511628" fill="#3c3c3c" stroke="#3c3c3c" stroke-width="0.22" font-weight="400" textLength="55.8" lengthAdjust="spacingAndGlyphs" style="">Z Angle</text></svg>
<svg style="position:absolute;left:1558.25px;top:657.46px;overflow:visible" width="56.8" height="22.7"><text x="0" y="17.44186046511628" font-size="17.44186046511628" fill="#3c3c3c" stroke="#3c3c3c" stroke-width="0.22" font-weight="400" textLength="55.8" lengthAdjust="spacingAndGlyphs" style="">Scale X</text></svg>
<svg style="position:absolute;left:1558.25px;top:702.76px;overflow:visible" width="58.8" height="22.7"><text x="0" y="17.44186046511628" font-size="17.44186046511628" fill="#3c3c3c" stroke="#3c3c3c" stroke-width="0.22" font-weight="400" textLength="57.8" lengthAdjust="spacingAndGlyphs" style="">Scale Y</text></svg>
<svg style="position:absolute;left:1558.25px;top:747.86px;overflow:visible" width="71.8" height="22.7"><text x="0" y="17.44186046511628" font-size="17.44186046511628" fill="#3c3c3c" stroke="#3c3c3c" stroke-width="0.22" font-weight="400" textLength="70.8" lengthAdjust="spacingAndGlyphs" style="">Scale Pl...</text></svg>
<svg style="position:absolute;left:1558.25px;top:792.86px;overflow:visible" width="71.8" height="22.7"><text x="0" y="17.44186046511628" font-size="17.44186046511628" fill="#3c3c3c" stroke="#3c3c3c" stroke-width="0.22" font-weight="400" textLength="70.8" lengthAdjust="spacingAndGlyphs" style="">Horizon'...</text></svg>
<div style="position:absolute;left:1637.5px;top:380px;width:184px;height:39px;background:#fff;border:1.5px solid #dedede;border-radius:3px"></div>
<svg style="position:absolute;left:1642.5px;top:389.5px" width="24" height="20"><use href="#folder" width="24" height="20"/></svg>
<svg style="position:absolute;left:1669.00px;top:388.06px;overflow:visible" width="143.8" height="22.7"><text x="0" y="17.44186046511628" font-size="17.44186046511628" fill="#3c3c3c" stroke="#3c3c3c" stroke-width="0.22" font-weight="400" textLength="142.8" lengthAdjust="spacingAndGlyphs" style="">Roles-removebg-p...</text></svg>
<svg style="position:absolute;left:1838px;top:393px;" width="14" height="14" viewBox="0 0 14 14"><path d="M1.5 1.5L12 12M12 1.5L1.5 12" stroke="#3a3a3a" stroke-width="2.4"/></svg>
<div style="position:absolute;left:1637px;top:423.75px;width:87.5px;height:40.5px;background:#0696d7;border-radius:3px"></div>
<svg style="position:absolute;left:1648.5px;top:433px;" width="15" height="22" viewBox="0 0 15 22"><path d="M1 1V17L5 13.5L8 20.5L10.5 19.5L7.5 12.5H13Z" fill="#707070" stroke="#d8d8d8" stroke-width="1.3" stroke-linejoin="round"/></svg>
<svg style="position:absolute;left:1669.50px;top:433.06px;overflow:visible" width="47.0" height="22.7"><text x="0" y="17.44186046511628" font-size="17.44186046511628" fill="#ffffff" stroke="#ffffff" stroke-width="0.22" font-weight="400" textLength="46.0" lengthAdjust="spacingAndGlyphs" style="">Select</text></svg>
<div style="position:absolute;left:1637px;top:473px;width:59.25px;height:30.75px;background:#fff"></div>
<svg style="position:absolute;left:1640.00px;top:478.06px;overflow:visible" width="27.0" height="22.7"><text x="0" y="17.44186046511628" font-size="17.44186046511628" fill="#3c3c3c" stroke="#3c3c3c" stroke-width="0.22" font-weight="400" textLength="26.0" lengthAdjust="spacingAndGlyphs" style="">100</text></svg>
<div style="position:absolute;left:1708.75px;top:486.5px;width:143.75px;height:6px;background:#7b9ad4;border-radius:3px"></div>
<svg style="position:absolute;left:1842px;top:476.5px;" width="22" height="22" viewBox="0 0 22 22"><defs><linearGradient id="thg" x1="0" y1="0" x2="0" y2="1"><stop offset="0" stop-color="#e8e8e8"/><stop offset="1" stop-color="#9a9a9a"/></linearGradient></defs><path d="M1.5 16V11Q1.5 8 4 5.5L8 1.8Q10.5 -0.2 13 1.8L17 5.5Q19.5 8 19.5 11V16Q19.5 20.5 15 20.5H6Q1.5 20.5 1.5 16Z" fill="url(#thg)" stroke="#6a6a6a" stroke-width="1.1"/></svg>
<div style="position:absolute;left:1638.25px;top:515px;width:226.25px;height:37.5px;background:#fff;border:1px solid #cfcfcf"></div>
<svg style="position:absolute;left:1642.00px;top:522.31px;overflow:visible" width="58.2" height="22.7"><text x="0" y="17.44186046511628" font-size="17.44186046511628" fill="#3c3c3c" stroke="#3c3c3c" stroke-width="0.22" font-weight="400" textLength="57.2" lengthAdjust="spacingAndGlyphs" style="">0.141 in</text></svg>
<div style="position:absolute;left:1638.25px;top:560px;width:226.25px;height:37.5px;background:#fff;border:1px solid #cfcfcf"></div>
<svg style="position:absolute;left:1642.00px;top:567.31px;overflow:visible" width="64.0" height="22.7"><text x="0" y="17.44186046511628" font-size="17.44186046511628" fill="#3c3c3c" stroke="#3c3c3c" stroke-width="0.22" font-weight="400" textLength="63.0" lengthAdjust="spacingAndGlyphs" style="">-0.135 in</text></svg>
<div style="position:absolute;left:1638.25px;top:604.3px;width:226.25px;height:38.700000000000045px;background:#fff;border:1px solid #cfcfcf"></div>
<svg style="position:absolute;left:1642.00px;top:612.21px;overflow:visible" width="56.0" height="22.7"><text x="0" y="17.44186046511628" font-size="17.44186046511628" fill="#3c3c3c" stroke="#3c3c3c" stroke-width="0.22" font-weight="400" textLength="55.0" lengthAdjust="spacingAndGlyphs" style="">0.0 deg</text></svg>
<div style="position:absolute;left:1638.25px;top:650.2px;width:226.25px;height:37.299999999999955px;background:#fff;border:1px solid #cfcfcf"></div>
<svg style="position:absolute;left:1642.00px;top:657.41px;overflow:visible" width="33.0" height="22.7"><text x="0" y="17.44186046511628" font-size="17.44186046511628" fill="#3c3c3c" stroke="#3c3c3c" stroke-width="0.22" font-weight="400" textLength="32.0" lengthAdjust="spacingAndGlyphs" style="">1.00</text></svg>
<div style="position:absolute;left:1638.25px;top:695.5px;width:226.25px;height:37.299999999999955px;background:#fff;border:1px solid #cfcfcf"></div>
<svg style="position:absolute;left:1642.00px;top:702.71px;overflow:visible" width="33.0" height="22.7"><text x="0" y="17.44186046511628" font-size="17.44186046511628" fill="#3c3c3c" stroke="#3c3c3c" stroke-width="0.22" font-weight="400" textLength="32.0" lengthAdjust="spacingAndGlyphs" style="">1.00</text></svg>
<div style="position:absolute;left:1638.25px;top:740.5px;width:226.25px;height:37.5px;background:#fff;border:1px solid #cfcfcf"></div>
<svg style="position:absolute;left:1642.00px;top:747.81px;overflow:visible" width="33.0" height="22.7"><text x="0" y="17.44186046511628" font-size="17.44186046511628" fill="#3c3c3c" stroke="#3c3c3c" stroke-width="0.22" font-weight="400" textLength="32.0" lengthAdjust="spacingAndGlyphs" style="">1.00</text></svg>
<svg style="position:absolute;left:1642px;top:791px;" width="24" height="24" viewBox="0 0 24 24"><path d="M1.5 6L11 12.5L1.5 20Z" fill="#e8eef5" stroke="#8a9ab0" stroke-width="1"/><path d="M22.5 6L13 12.5L22.5 20Z" fill="#e8eef5" stroke="#8a9ab0" stroke-width="1"/><path d="M3 4Q12 -2 20 4" fill="none" stroke="#555" stroke-width="1"/><path d="M18 1.5L21 5L17 5.5Z" fill="#555"/><path d="M6 12.5L11 9.5V15.5Z" fill="#6aa9de"/></svg>
<div style="position:absolute;left:1540px;top:830px;width:360px;height:15px;overflow:hidden"><div style="position:absolute;left:18.75px;top:8.5px;font-size:16px;line-height:16px;color:#3c3c3c;white-space:nowrap;transform:scaleX(0.97);transform-origin:0 0">Vertical...</div></div>
<svg style="position:absolute;left:1644px;top:836px;" width="20" height="9" viewBox="0 0 20 9"><path d="M4 1L16 1L10 8Z" fill="#cde0f2" stroke="#6a8ab0" stroke-width="1"/><path d="M2 8Q2 2 6 1" fill="none" stroke="#555" stroke-width="1"/></svg>
<div style="position:absolute;left:1540px;top:845px;width:362px;height:1px;background:#c8c8c8"></div>
<svg style="position:absolute;left:1552.5px;top:863.5px;" width="18" height="18" viewBox="0 0 18 18"><circle cx="9" cy="9" r="8.8" fill="#111"/><rect x="7.6" y="7.5" width="2.8" height="7" fill="#fff"/><circle cx="9" cy="4.8" r="1.6" fill="#fff"/><rect x="6.5" y="7.5" width="2" height="1.2" fill="#fff"/><rect x="6.5" y="13.6" width="5" height="1.2" fill="#fff"/></svg>
<div style="position:absolute;left:1701.3px;top:858.2px;width:89px;height:27.3px;background:#e6e6e6;border:1px solid #b8b8b8"></div>
<svg style="position:absolute;left:1732.50px;top:861.06px;overflow:visible" width="27.0" height="22.7"><text x="0" y="17.44186046511628" font-size="17.44186046511628" fill="#7a7a7a" stroke="#7a7a7a" stroke-width="0.22" font-weight="400" textLength="26.0" lengthAdjust="spacingAndGlyphs" style="">OK</text></svg>
<div style="position:absolute;left:1806px;top:858.2px;width:89.3px;height:27.3px;background:#e6e6e6;border:1px solid #b8b8b8"></div>
<svg style="position:absolute;left:1821.00px;top:861.06px;overflow:visible" width="59.0" height="22.7"><text x="0" y="17.44186046511628" font-size="17.44186046511628" fill="#6a6a6a" stroke="#6a6a6a" stroke-width="0.22" font-weight="400" textLength="58.0" lengthAdjust="spacingAndGlyphs" style="">Cancel</text></svg>
<div style="position:absolute;left:782.5px;top:903px;width:355px;height:36px;background:#f0f0f0"></div>
<svg style="position:absolute;left:786px;top:908.5px;" width="25" height="25" viewBox="0 0 25 25"><path d="M12.5 1L8.5 5.5H11V24H14V5.5H16.5Z" fill="#f4f4f4" stroke="#333" stroke-width="1.1" stroke-linejoin="round"/><path d="M19 11.5Q24.5 14 22 17Q18 20.5 8 19.5" fill="none" stroke="#333" stroke-width="1.6"/><path d="M9 19.7Q2 18 2.5 15Q3 13 8 12" fill="none" stroke="#333" stroke-width="1.6"/><path d="M8.5 16L3.5 19.5L8.5 23Z" fill="#222"/></svg>
<svg style="position:absolute;left:818.3px;top:918px;" width="9" height="7" viewBox="0 0 9 7"><path d="M0 0.5H8.4L4.2 6.5z" fill="#333"/></svg>
<svg style="position:absolute;left:836px;top:908.5px;" width="25" height="25" viewBox="0 0 25 25"><path d="M3 8L8 2L10 6L13 3L15 6H22V8Z" fill="#777"/><rect x="1.5" y="8.5" width="22" height="15" fill="#f4f4f4" stroke="#444" stroke-width="1.6"/><rect x="5.5" y="12.5" width="14" height="7" fill="#8a8a8a" stroke="#444" stroke-width="1"/></svg>
<svg style="position:absolute;left:875.6px;top:908.5px;" width="25" height="25" viewBox="0 0 25 25"><path d="M7 23.5Q4 19 1.5 14.5Q1 12.5 3.2 13L7 17V5Q7 3 8.8 3Q10.5 3 10.5 5V11V2.5Q10.5 0.8 12.3 0.8Q14 0.8 14 2.5V11V3.5Q14 1.8 15.8 1.8Q17.5 1.8 17.5 3.5V11V6Q17.5 4.3 19.2 4.3Q21 4.3 21 6V15Q21 21 17.5 23.5Z" fill="#f8f8f8" stroke="#333" stroke-width="1.3" stroke-linejoin="round"/></svg>
<svg style="position:absolute;left:914px;top:908.5px;" width="25" height="25" viewBox="0 0 25 25"><circle cx="9.5" cy="13.5" r="7" fill="#dfeef0" stroke="#444" stroke-width="1.8"/><path d="M14.5 18.5L20 24" stroke="#333" stroke-width="3.6" stroke-linecap="round"/><path d="M20.5 1V8M17 4.5H24M17 11H24" stroke="#333" stroke-width="1.4"/></svg>
<svg style="position:absolute;left:952.7px;top:908.5px;" width="26" height="25" viewBox="0 0 26 25"><rect x="1" y="1" width="23" height="22" fill="none" stroke="#555" stroke-width="1" stroke-dasharray="2 2"/><circle cx="11" cy="10.5" r="8.2" fill="#dfeef0" stroke="#444" stroke-width="1.8"/><path d="M17 16.5L22.5 22" stroke="#333" stroke-width="3.6" stroke-linecap="round"/></svg>
<svg style="position:absolute;left:985.4px;top:918px;" width="9" height="7" viewBox="0 0 9 7"><path d="M0 0.5H8.4L4.2 6.5z" fill="#333"/></svg>
<svg style="position:absolute;left:1002.7px;top:908.5px;" width="25" height="25" viewBox="0 0 25 25"><rect x="1" y="1" width="23" height="17.5" rx="1.5" fill="#d8d8d8" stroke="#444" stroke-width="1.4"/><rect x="4" y="4" width="17" height="11.5" fill="#8fb5e8" stroke="#4a6a9a" stroke-width="0.8"/><path d="M9 19V22H16V19Z M6 22.5H19V24H6Z" fill="#888"/></svg>
<svg style="position:absolute;left:1030.8px;top:918px;" width="9" height="7" viewBox="0 0 9 7"><path d="M0 0.5H8.4L4.2 6.5z" fill="#333"/></svg>
<svg style="position:absolute;left:1049.6px;top:908.5px;" width="24" height="24" viewBox="0 0 24 24"><rect x="1" y="1" width="22" height="22" rx="1.5" fill="#777" stroke="#555" stroke-width="1.4"/><line x1="5.1" y1="1.5" x2="5.1" y2="22.5" stroke="#fff" stroke-width="1"/><line x1="8.7" y1="1.5" x2="8.7" y2="22.5" stroke="#fff" stroke-width="1"/><line x1="12.3" y1="1.5" x2="12.3" y2="22.5" stroke="#fff" stroke-width="1"/><line x1="15.9" y1="1.5" x2="15.9" y2="22.5" stroke="#fff" stroke-width="1"/><line x1="19.5" y1="1.5" x2="19.5" y2="22.5" stroke="#fff" stroke-width="1"/><line x1="1.5" y1="5.0" x2="22.5" y2="5.0" stroke="#fff" stroke-width="1"/><line x1="1.5" y1="8.5" x2="22.5" y2="8.5" stroke="#fff" stroke-width="1"/><line x1="1.5" y1="12.0" x2="22.5" y2="12.0" stroke="#fff" stroke-width="1"/><line x1="1.5" y1="15.5" x2="22.5" y2="15.5" stroke="#fff" stroke-width="1"/><line x1="1.5" y1="19.0" x2="22.5" y2="19.0" stroke="#fff" stroke-width="1"/></svg>
<svg style="position:absolute;left:1077px;top:918px;" width="9" height="7" viewBox="0 0 9 7"><path d="M0 0.5H8.4L4.2 6.5z" fill="#333"/></svg>
<svg style="position:absolute;left:1095.8px;top:908.5px;" width="24" height="24" viewBox="0 0 24 24"><rect x="1" y="1.5" width="22" height="21" rx="1.5" fill="#4a78c2"/><rect x="3" y="3.5" width="8" height="7.5" fill="#9fc0ec" stroke="#c8dcf6" stroke-width="0.6"/><rect x="13" y="3.5" width="8" height="7.5" fill="#9fc0ec" stroke="#c8dcf6" stroke-width="0.6"/><rect x="3" y="13" width="8" height="7.5" fill="#9fc0ec" stroke="#c8dcf6" stroke-width="0.6"/><rect x="13" y="13" width="8" height="7.5" fill="#9fc0ec" stroke="#c8dcf6" stroke-width="0.6"/></svg>
<svg style="position:absolute;left:1123.5px;top:918px;" width="9" height="7" viewBox="0 0 9 7"><path d="M0 0.5H8.4L4.2 6.5z" fill="#333"/></svg>
<div style="position:absolute;left:0px;top:946px;width:1920px;height:74px;background:#f0f0f0"></div>
<div style="position:absolute;left:0px;top:946px;width:1920px;height:1px;background:#dedede"></div>
<svg style="position:absolute;left:16px;top:973px;" width="20" height="22" viewBox="0 0 20 22"><rect x="0.5" y="0" width="3.2" height="21" fill="#3a3a3a"/><path d="M19 0.5V20.5L4.5 10.5Z" fill="#3a3a3a"/></svg>
<svg style="position:absolute;left:52.7px;top:973px;" width="21" height="22" viewBox="0 0 21 22"><path d="M14.5 0.5V20.5L0.5 10.5Z" fill="#3a3a3a"/><rect x="16.5" y="6" width="3.2" height="9" fill="#3a3a3a"/></svg>
<svg style="position:absolute;left:90.7px;top:973px;" width="20" height="22" viewBox="0 0 20 22"><path d="M0.5 0.5V20.5L18.5 10.5Z" fill="#3a3a3a"/></svg>
<svg style="position:absolute;left:126.7px;top:973px;" width="21" height="22" viewBox="0 0 21 22"><rect x="0" y="6" width="3.2" height="9" fill="#3a3a3a"/><path d="M5.5 0.5V20.5L19.5 10.5Z" fill="#3a3a3a"/></svg>
<svg style="position:absolute;left:166px;top:973px;" width="20" height="22" viewBox="0 0 20 22"><path d="M0.5 0.5V20.5L15 10.5Z" fill="#3a3a3a"/><rect x="15.8" y="0" width="3.2" height="21" fill="#3a3a3a"/></svg>
<svg width="0" height="0" style="position:absolute"><defs>
<symbol id="t_sk" viewBox="0 0 26 26"><path d="M2.5 2.5H20.5V13M13 20.5H2.5V2.5" fill="none" stroke="#444" stroke-width="1.1" stroke-dasharray="2.5 1.8"/><rect x="1" y="1" width="3" height="3" fill="#1a8fe3"/><rect x="19" y="1" width="3" height="3" fill="#1a8fe3"/><rect x="1" y="19" width="3" height="3" fill="#1a8fe3"/><path d="M13 22L20 15L23 18L16 25Z" fill="#f4b43a"/><path d="M20 15L22 13L25 16L23 18Z" fill="#e8413c"/><path d="M13 22L12 25.5L16 25Z" fill="#555"/></symbol>
<symbol id="t_ex" viewBox="0 0 26 26"><path d="M2 23V19L5 16H17L14 20V23Z" fill="#c8c8c8"/><path d="M2 7L6 3H18L14 7Z" fill="#8cc8f5"/><path d="M2 7H14V20H2Z" fill="#65ace4"/><path d="M14 7L18 3V16L14 20Z" fill="#3f8fcf"/><path d="M22.5 23V5" stroke="#222" stroke-width="1.2"/><path d="M20.3 6.5L22.5 2L24.7 6.5Z" fill="#222"/></symbol>
<symbol id="t_sp" viewBox="0 0 26 26"><circle cx="13" cy="13" r="12" fill="#7ec4f6"/><path d="M1.5 14Q13 19 24.5 14Q23 24 13 25Q3 24 1.5 14Z" fill="#6bb3ea"/></symbol>
<symbol id="t_dc" viewBox="0 0 26 26"><rect x="1" y="1" width="14" height="13" fill="#5ca7e3"/><path d="M1 14L5 8L9 11L11 9L15 14Z" fill="#3f8acb"/><circle cx="12" cy="4.5" r="1.8" fill="#f4f0a0"/><path d="M12 14H22Q25 14 25 17V25H15Q12 25 12 22Z" fill="#e8e8e8" stroke="#666" stroke-width="1"/><path d="M4 16V20H9M7 18L9 20L7 22" fill="none" stroke="#222" stroke-width="1.2"/></symbol>
<symbol id="t_mv" viewBox="0 0 26 26"><path d="M13 1L17 6H14.5V11.5H20V9L25 13L20 17V14.5H14.5V20H17L13 25L9 20H11.5V14.5H6V17L1 13L6 9V11.5H11.5V6H9Z" fill="#222"/></symbol>
<symbol id="t_nc" viewBox="0 0 26 26"><path d="M3 10L7 6H17L13 10Z M3 10H13V23H3Z M13 10L17 6V19L13 23Z" fill="#ececec" stroke="#dcdcdc" stroke-width="1"/><path d="M19 1L20 5L24 4L21 7L24 10L20 9L19 13L18 9L14 10L17 7L14 4L18 5Z" fill="#f8d27a"/></symbol>
<symbol id="t_exf" viewBox="0 0 26 26"><path d="M2 7L6 3H18L14 7Z" fill="#dceaf6"/><path d="M2 7H14V20H2Z" fill="#d2e4f4"/><path d="M14 7L18 3V16L14 20Z" fill="#c4d8ea"/><path d="M2 23V20H14V23Z" fill="#e8e8e8"/><path d="M22.5 23V4M20 7L22.5 2L25 7" fill="none" stroke="#cfcfcf" stroke-width="1.4"/></symbol>
</defs></svg>
<svg style="position:absolute;left:218.2px;top:967.5px" width="26" height="26"><use href="#t_sk" width="26" height="26"/></svg>
<div style="position:absolute;left:229.5px;top:998.5px;width:2.4px;height:8px;background:#c8c8c8"></div>
<svg style="position:absolute;left:254.2px;top:967.5px" width="26" height="26"><use href="#t_ex" width="26" height="26"/></svg>
<div style="position:absolute;left:265.46999999999997px;top:998.5px;width:2.4px;height:8px;background:#c8c8c8"></div>
<svg style="position:absolute;left:290.1px;top:967.5px" width="26" height="26"><use href="#t_sk" width="26" height="26"/></svg>
<div style="position:absolute;left:301.44px;top:998.5px;width:2.4px;height:8px;background:#c8c8c8"></div>
<svg style="position:absolute;left:326.1px;top:967.5px" width="26" height="26"><use href="#t_ex" width="26" height="26"/></svg>
<div style="position:absolute;left:337.41px;top:998.5px;width:2.4px;height:8px;background:#c8c8c8"></div>
<svg style="position:absolute;left:362.1px;top:967.5px" width="26" height="26"><use href="#t_ex" width="26" height="26"/></svg>
<div style="position:absolute;left:373.38px;top:998.5px;width:2.4px;height:8px;background:#c8c8c8"></div>
<svg style="position:absolute;left:398.0px;top:967.5px" width="26" height="26"><use href="#t_sp" width="26" height="26"/></svg>
<div style="position:absolute;left:409.34999999999997px;top:998.5px;width:2.4px;height:8px;background:#c8c8c8"></div>
<svg style="position:absolute;left:434.0px;top:967.5px" width="26" height="26"><use href="#t_sp" width="26" height="26"/></svg>
<div style="position:absolute;left:445.32px;top:998.5px;width:2.4px;height:8px;background:#c8c8c8"></div>
<div style="position:absolute;left:464.79px;top:964px;width:35px;height:35.5px;background:#e4e622;border-radius:4px"></div>
<svg style="position:absolute;left:470.0px;top:967.5px" width="26" height="26"><use href="#t_ex" width="26" height="26"/></svg>
<div style="position:absolute;left:481.29px;top:998.5px;width:2.4px;height:8px;background:#c8c8c8"></div>
<div style="position:absolute;left:500.76000000000005px;top:964px;width:35px;height:35.5px;background:#e4e622;border-radius:4px"></div>
<svg style="position:absolute;left:506.0px;top:967.5px" width="26" height="26"><use href="#t_ex" width="26" height="26"/></svg>
<div style="position:absolute;left:517.26px;top:998.5px;width:2.4px;height:8px;background:#c8c8c8"></div>
<svg style="position:absolute;left:541.9px;top:967.5px" width="26" height="26"><use href="#t_sk" width="26" height="26"/></svg>
<div style="position:absolute;left:553.23px;top:998.5px;width:2.4px;height:8px;background:#c8c8c8"></div>
<svg style="position:absolute;left:577.9px;top:967.5px" width="26" height="26"><use href="#t_ex" width="26" height="26"/></svg>
<div style="position:absolute;left:589.1999999999999px;top:998.5px;width:2.4px;height:8px;background:#c8c8c8"></div>
<svg style="position:absolute;left:613.9px;top:967.5px" width="26" height="26"><use href="#t_sk" width="26" height="26"/></svg>
<div style="position:absolute;left:625.1699999999998px;top:998.5px;width:2.4px;height:8px;background:#c8c8c8"></div>
<svg style="position:absolute;left:649.8px;top:967.5px" width="26" height="26"><use href="#t_ex" width="26" height="26"/></svg>
<div style="position:absolute;left:661.1399999999999px;top:998.5px;width:2.4px;height:8px;background:#c8c8c8"></div>
<svg style="position:absolute;left:685.8px;top:967.5px" width="26" height="26"><use href="#t_sp" width="26" height="26"/></svg>
<div style="position:absolute;left:697.1099999999999px;top:998.5px;width:2.4px;height:8px;background:#c8c8c8"></div>
<svg style="position:absolute;left:721.8px;top:967.5px" width="26" height="26"><use href="#t_sp" width="26" height="26"/></svg>
<div style="position:absolute;left:733.0799999999999px;top:998.5px;width:2.4px;height:8px;background:#c8c8c8"></div>
<svg style="position:absolute;left:757.8px;top:967.5px" width="26" height="26"><use href="#t_sk" width="26" height="26"/></svg>
<div style="position:absolute;left:769.05px;top:998.5px;width:2.4px;height:8px;background:#c8c8c8"></div>
<svg style="position:absolute;left:793.7px;top:967.5px" width="26" height="26"><use href="#t_sk" width="26" height="26"/></svg>
<div style="position:absolute;left:805.02px;top:998.5px;width:2.4px;height:8px;background:#c8c8c8"></div>
<svg style="position:absolute;left:829.7px;top:967.5px" width="26" height="26"><use href="#t_sk" width="26" height="26"/></svg>
<div style="position:absolute;left:840.99px;top:998.5px;width:2.4px;height:8px;background:#c8c8c8"></div>
<svg style="position:absolute;left:865.7px;top:967.5px" width="26" height="26"><use href="#t_sk" width="26" height="26"/></svg>
<div style="position:absolute;left:876.96px;top:998.5px;width:2.4px;height:8px;background:#c8c8c8"></div>
<svg style="position:absolute;left:901.6px;top:967.5px" width="26" height="26"><use href="#t_sk" width="26" height="26"/></svg>
<div style="position:absolute;left:912.9299999999998px;top:998.5px;width:2.4px;height:8px;background:#c8c8c8"></div>
<svg style="position:absolute;left:937.6px;top:967.5px" width="26" height="26"><use href="#t_ex" width="26" height="26"/></svg>
<div style="position:absolute;left:948.8999999999999px;top:998.5px;width:2.4px;height:8px;background:#c8c8c8"></div>
<svg style="position:absolute;left:973.6px;top:967.5px" width="26" height="26"><use href="#t_dc" width="26" height="26"/></svg>
<div style="position:absolute;left:984.8699999999999px;top:998.5px;width:2.4px;height:8px;background:#c8c8c8"></div>
<svg style="position:absolute;left:1009.5px;top:967.5px" width="26" height="26"><use href="#t_mv" width="26" height="26"/></svg>
<div style="position:absolute;left:1020.8399999999999px;top:998.5px;width:2.4px;height:8px;background:#c8c8c8"></div>
<svg style="position:absolute;left:1045.5px;top:967.5px" width="26" height="26"><use href="#t_ex" width="26" height="26"/></svg>
<div style="position:absolute;left:1056.81px;top:998.5px;width:2.4px;height:8px;background:#c8c8c8"></div>
<svg style="position:absolute;left:1081.5px;top:967.5px" width="26" height="26"><use href="#t_sk" width="26" height="26"/></svg>
<div style="position:absolute;left:1092.78px;top:998.5px;width:2.4px;height:8px;background:#c8c8c8"></div>
<div style="position:absolute;left:1112.25px;top:964px;width:35px;height:35.5px;background:#e4e622;border-radius:4px"></div>
<svg style="position:absolute;left:1117.5px;top:967.5px" width="26" height="26"><use href="#t_ex" width="26" height="26"/></svg>
<div style="position:absolute;left:1128.75px;top:998.5px;width:2.4px;height:8px;background:#c8c8c8"></div>
<div style="position:absolute;left:1148.22px;top:964px;width:35px;height:35.5px;background:#e4e622;border-radius:4px"></div>
<svg style="position:absolute;left:1153.4px;top:967.5px" width="26" height="26"><use href="#t_ex" width="26" height="26"/></svg>
<div style="position:absolute;left:1164.72px;top:998.5px;width:2.4px;height:8px;background:#c8c8c8"></div>
<div style="position:absolute;left:1184.1899999999998px;top:964px;width:35px;height:35.5px;background:#e4e622;border-radius:4px"></div>
<svg style="position:absolute;left:1189.4px;top:967.5px" width="26" height="26"><use href="#t_ex" width="26" height="26"/></svg>
<div style="position:absolute;left:1200.6899999999998px;top:998.5px;width:2.4px;height:8px;background:#c8c8c8"></div>
<svg style="position:absolute;left:1225.4px;top:967.5px" width="26" height="26"><use href="#t_sk" width="26" height="26"/></svg>
<div style="position:absolute;left:1236.6599999999999px;top:998.5px;width:2.4px;height:8px;background:#c8c8c8"></div>
<svg style="position:absolute;left:1261.3px;top:967.5px" width="26" height="26"><use href="#t_ex" width="26" height="26"/></svg>
<div style="position:absolute;left:1272.6299999999999px;top:998.5px;width:2.4px;height:8px;background:#c8c8c8"></div>
<svg style="position:absolute;left:1297.3px;top:967.5px" width="26" height="26"><use href="#t_ex" width="26" height="26"/></svg>
<div style="position:absolute;left:1308.6px;top:998.5px;width:2.4px;height:8px;background:#c8c8c8"></div>
<svg style="position:absolute;left:1333.3px;top:967.5px" width="26" height="26"><use href="#t_dc" width="26" height="26"/></svg>
<div style="position:absolute;left:1344.57px;top:998.5px;width:2.4px;height:8px;background:#c8c8c8"></div>
<svg style="position:absolute;left:1369.2px;top:967.5px" width="26" height="26"><use href="#t_dc" width="26" height="26"/></svg>
<div style="position:absolute;left:1380.54px;top:998.5px;width:2.4px;height:8px;background:#c8c8c8"></div>
<svg style="position:absolute;left:1405.2px;top:967.5px" width="26" height="26"><use href="#t_mv" width="26" height="26"/></svg>
<div style="position:absolute;left:1416.51px;top:998.5px;width:2.4px;height:8px;background:#c8c8c8"></div>
<svg style="position:absolute;left:1441.2px;top:967.5px" width="26" height="26"><use href="#t_mv" width="26" height="26"/></svg>
<div style="position:absolute;left:1452.48px;top:998.5px;width:2.4px;height:8px;background:#c8c8c8"></div>
<svg style="position:absolute;left:1477.2px;top:967.5px" width="26" height="26"><use href="#t_sk" width="26" height="26"/></svg>
<div style="position:absolute;left:1488.45px;top:998.5px;width:2.4px;height:8px;background:#c8c8c8"></div>
<svg style="position:absolute;left:1513.1px;top:967.5px" width="26" height="26"><use href="#t_ex" width="26" height="26"/></svg>
<div style="position:absolute;left:1524.42px;top:998.5px;width:2.4px;height:8px;background:#c8c8c8"></div>
<svg style="position:absolute;left:1549.1px;top:967.5px" width="26" height="26"><use href="#t_nc" width="26" height="26"/></svg>
<div style="position:absolute;left:1560.3899999999999px;top:998.5px;width:2.4px;height:8px;background:#c8c8c8"></div>
<svg style="position:absolute;left:1585.1px;top:967.5px" width="26" height="26"><use href="#t_exf" width="26" height="26"/></svg>
<div style="position:absolute;left:1596.36px;top:998.5px;width:2.4px;height:8px;background:#c8c8c8"></div>
<svg style="position:absolute;left:1621.0px;top:967.5px" width="26" height="26"><use href="#t_nc" width="26" height="26"/></svg>
<div style="position:absolute;left:1632.33px;top:998.5px;width:2.4px;height:8px;background:#c8c8c8"></div>
<div style="position:absolute;left:220px;top:1006.5px;width:1417px;height:2.5px;background:#cbcbcb"></div>
<svg style="position:absolute;left:1536px;top:960.5px;" width="19" height="49" viewBox="0 0 19 49"><path d="M0.5 3Q0.5 0.5 3 0.5H15.5Q18 0.5 18 3V6L11 13V48H7.5V13L0.5 6Z" fill="#5a5a5a"/></svg>
<svg style="position:absolute;left:1876px;top:971px;" width="25" height="25" viewBox="0 0 25 25"><path d="M24.75 10.02 L24.75 14.98 L20.72 16.17 L20.91 15.72 L22.92 19.41 L19.41 22.92 L15.72 20.91 L16.17 20.72 L14.98 24.75 L10.02 24.75 L8.83 20.72 L9.28 20.91 L5.59 22.92 L2.08 19.41 L4.09 15.72 L4.28 16.17 L0.25 14.98 L0.25 10.02 L4.28 8.83 L4.09 9.28 L2.08 5.59 L5.59 2.08 L9.28 4.09 L8.83 4.28 L10.02 0.25 L14.98 0.25 L16.17 4.28 L15.72 4.09 L19.41 2.08 L22.92 5.59 L20.91 9.28 L20.72 8.83Z" fill="#9a9a9a"/><circle cx="12.5" cy="12.5" r="4" fill="#f0f0f0"/></svg>
<div style="position:absolute;left:0px;top:1020px;width:1920px;height:60px;background:#1e1f27"></div>
<div style="position:absolute;left:504px;top:1019px;width:1416px;height:1px;background:#fafafa"></div>
<svg style="position:absolute;left:24px;top:1037.7px;" width="25" height="25" viewBox="0 0 25 25"><path d="M0 3.3L10.2 1.9V11.6H0Z M11.4 1.7L24.3 0V11.6H11.4Z M0 12.8H10.2V22.6L0 21.2Z M11.4 12.8H24.3V24.3L11.4 22.5Z" fill="#fff"/></svg>
<div style="position:absolute;left:72px;top:1020px;width:431.5px;height:60px;background:#f2f2f2;border:2px solid #bfbfbf"></div>
<svg style="position:absolute;left:90px;top:1038px;" width="25" height="25" viewBox="0 0 25 25"><circle cx="15.6" cy="7.9" r="7.2" fill="none" stroke="#111" stroke-width="1.4"/><path d="M10.4 13.2L0.5 23" stroke="#111" stroke-width="1.5"/></svg>
<svg style="position:absolute;left:132.20px;top:1036.74px;overflow:visible" width="198.6" height="30.2"><text x="0" y="23.255813953488374" font-size="23.255813953488374" fill="#333333" stroke="#333333" stroke-width="0.22" font-weight="400" textLength="197.6" lengthAdjust="spacingAndGlyphs" style="">Type here to search</text></svg>
<svg style="position:absolute;left:527px;top:1037.5px;" width="26" height="25" viewBox="0 0 26 25"><rect x="1" y="5" width="15" height="14" fill="none" stroke="#fff" stroke-width="1.6"/><path d="M0 1.2H17M0 22.8H17" stroke="#fff" stroke-width="1.6"/><path d="M22.5 0V9M22.5 14V24M20 11.5H25" stroke="#fff" stroke-width="1.6"/></svg>
<svg style="position:absolute;left:599px;top:1031.7px;" width="42" height="42" viewBox="0 0 42 42"><circle cx="19" cy="19" r="18.5" fill="#db4437"/><path d="M19 19L37.5 19A18.5 18.5 0 0 1 10 35Z" fill="#f4c20d"/><path d="M19 19L10 35A18.5 18.5 0 0 1 2.9 9.7Z" fill="#0f9d58"/><path d="M19 19L2.9 9.7A18.5 18.5 0 0 1 37.5 19Z" fill="#db4437"/><path d="M2.9 9.7L10 22L19 19Z" fill="#0f9d58"/><path d="M37.5 19H19L28 28Z" fill="#f4c20d"/><circle cx="19" cy="19" r="8.2" fill="#fff"/><circle cx="19" cy="19" r="6.5" fill="#4285f4"/><circle cx="30" cy="30" r="11" fill="#2d4a73"/><path d="M21 33Q25 27 30 31Q36 28 40 34Q38 41 30 41Q23 40 21 33Z" fill="#c9ced6"/></svg>
<svg style="position:absolute;left:675px;top:1032px;" width="34" height="34" viewBox="0 0 34 34"><circle cx="16.7" cy="16.7" r="16.5" fill="#1ed760"/><path d="M7 11.5Q17 8 27 13" fill="none" stroke="#191414" stroke-width="3" stroke-linecap="round"/><path d="M8.5 17Q17 14.5 25.5 18.5" fill="none" stroke="#191414" stroke-width="2.6" stroke-linecap="round"/><path d="M9.5 22.5Q17 20.5 24 24" fill="none" stroke="#191414" stroke-width="2.2" stroke-linecap="round"/></svg>
<div style="position:absolute;left:731px;top:1020px;width:73px;height:60px;background:#41424a"></div>
<svg style="position:absolute;left:749px;top:1031.5px;" width="35" height="37" viewBox="0 0 35 37"><path d="M3 2L9 0H33V27L29 36H3Z" fill="#f37a1c"/><path d="M0 3Q0 0 3 0H29Q32 0 32 3V26H0Z" fill="#ff8a22"/><path d="M0 3Q0 0 3 0H6V26H0Z" fill="#ffa14d"/><rect x="4" y="26" width="28" height="10" rx="1" fill="#9c3f12"/><text x="18" y="34.2" font-size="8" font-weight="700" fill="#fff" text-anchor="middle">360</text><text x="18.5" y="20" font-size="19" font-weight="700" fill="#fff" text-anchor="middle">F</text></svg>
<svg style="position:absolute;left:823px;top:1031.7px;" width="42" height="42" viewBox="0 0 42 42"><circle cx="19" cy="19" r="18.5" fill="#db4437"/><path d="M19 19L37.5 19A18.5 18.5 0 0 1 10 35Z" fill="#f4c20d"/><path d="M19 19L10 35A18.5 18.5 0 0 1 2.9 9.7Z" fill="#0f9d58"/><path d="M19 19L2.9 9.7A18.5 18.5 0 0 1 37.5 19Z" fill="#db4437"/><path d="M2.9 9.7L10 22L19 19Z" fill="#0f9d58"/><path d="M37.5 19H19L28 28Z" fill="#f4c20d"/><circle cx="19" cy="19" r="8.2" fill="#fff"/><circle cx="19" cy="19" r="6.5" fill="#4285f4"/><circle cx="30" cy="30" r="11" fill="#6b5038"/><ellipse cx="30" cy="32" rx="7" ry="8" fill="#a58866"/><circle cx="27" cy="29" r="1.5" fill="#222"/><circle cx="33" cy="29" r="1.5" fill="#222"/></svg>
<svg style="position:absolute;left:900px;top:1034px;" width="34" height="30" viewBox="0 0 34 30"><path d="M1 3Q1 1 3 1H12L15 4H31Q33 4 33 6V27Q33 29 31 29H3Q1 29 1 27Z" fill="#f8c642"/><path d="M1 9H33V27Q33 29 31 29H3Q1 29 1 27Z" fill="#ffd65c"/><rect x="9" y="17" width="16" height="10" fill="#3c8ee0"/><rect x="12" y="20" width="10" height="9" fill="#ffd65c"/></svg>
<svg style="position:absolute;left:975.5px;top:1033px;" width="33" height="33" viewBox="0 0 33 33"><rect x="0.5" y="0.5" width="32" height="32" rx="2" fill="#2f7ed8"/><path d="M0.5 28L12 14L22 24L26 20L32.5 26V30Q32.5 32.5 30 32.5H3Q0.5 32.5 0.5 30Z" fill="#1d4fa0"/><path d="M12 14L22 24L26 20L32.5 26V32.5H10Z" fill="#2159b5" opacity="0.6"/><circle cx="22" cy="8" r="3.5" fill="#fff"/></svg>
<div style="position:absolute;left:587.3px;top:1076.7px;width:60.0px;height:3.3px;background:#76b9ed"></div>
<div style="position:absolute;left:662.3px;top:1076.7px;width:60.40000000000009px;height:3.3px;background:#76b9ed"></div>
<div style="position:absolute;left:731px;top:1076.7px;width:73px;height:3.3px;background:#76b9ed"></div>
<div style="position:absolute;left:812.3px;top:1076.7px;width:60.40000000000009px;height:3.3px;background:#76b9ed"></div>
<div style="position:absolute;left:887.3px;top:1076.7px;width:60.40000000000009px;height:3.3px;background:#76b9ed"></div>
<div style="position:absolute;left:962.3px;top:1076.7px;width:60.40000000000009px;height:3.3px;background:#76b9ed"></div>
<svg style="position:absolute;left:1245.7px;top:1034.5px;" width="30" height="30" viewBox="0 0 30 30"><defs><linearGradient id="sun" x1="0" y1="0" x2="1" y2="1"><stop offset="0" stop-color="#ffb829"/><stop offset="1" stop-color="#f5561a"/></linearGradient></defs><circle cx="15" cy="15" r="15" fill="url(#sun)"/></svg>
<svg style="position:absolute;left:1290.20px;top:1037.40px;overflow:visible" width="111.9" height="28.3"><text x="0" y="21.80232558139535" font-size="21.80232558139535" fill="#ffffff" stroke="#ffffff" stroke-width="0.22" font-weight="400" textLength="110.9" lengthAdjust="spacingAndGlyphs" style="">60°F&#160;&#160;Sunny</text></svg>
<svg style="position:absolute;left:1444.5px;top:1045px;" width="19" height="11" viewBox="0 0 19 11"><path d="M1 10L9.5 1.5L18 10" fill="none" stroke="#fff" stroke-width="1.5"/></svg>
<svg style="position:absolute;left:1494px;top:1038px;" width="18" height="24" viewBox="0 0 18 24"><rect x="1" y="7" width="10" height="10" rx="1.5" fill="none" stroke="#fff" stroke-width="1.3"/><path d="M11 10L16 7.5V16.5L11 14" fill="none" stroke="#fff" stroke-width="1.3"/><path d="M3 3Q9 0 15 3M3 21Q9 24 15 21" fill="none" stroke="#fff" stroke-width="1"/></svg>
<svg style="position:absolute;left:1537.5px;top:1039px;" width="25" height="18" viewBox="0 0 25 18"><path d="M4 0V5M8 0V5M2.5 5H9.5V8Q9.5 11 6 11Q2.5 11 2.5 8Z" fill="none" stroke="#fff" stroke-width="1.2"/><rect x="6" y="6" width="17" height="10" fill="none" stroke="#fff" stroke-width="1.3"/><rect x="8" y="8" width="13" height="6" fill="#fff"/><rect x="23" y="9" width="2" height="4" fill="#fff"/></svg>
<svg style="position:absolute;left:1585.5px;top:1040px;" width="26" height="22" viewBox="0 0 26 22"><path d="M3 15Q0 15 0 11Q0 7 4 7Q5 1 11 1Q17 1 18 7Q22 7 22 11Q22 15 19 15Z" fill="#d8d8d8"/><path d="M5 12Q3 6 9 6" fill="none" stroke="#888" stroke-width="1"/><circle cx="18" cy="15.5" r="6.5" fill="#ffe100"/><rect x="17" y="11.5" width="2" height="5" fill="#111"/><rect x="17" y="17.5" width="2" height="2" fill="#111"/></svg>
<svg style="position:absolute;left:1641.7px;top:1039px;" width="21" height="23" viewBox="0 0 21 23"><path d="M2 21L4 14L15 3Q17 1 19 3Q21 5 19 7L8 18Z" fill="none" stroke="#fff" stroke-width="1.3"/><path d="M12 6L16 10" stroke="#fff" stroke-width="1.2"/><path d="M3 22Q7 20 6 18" fill="none" stroke="#fff" stroke-width="1"/></svg>
<svg style="position:absolute;left:1691.50px;top:1038.10px;overflow:visible" width="35.7" height="24.6"><text x="0" y="18.895348837209305" font-size="18.895348837209305" fill="#ffffff" stroke="#ffffff" stroke-width="0.22" font-weight="400" textLength="34.7" lengthAdjust="spacingAndGlyphs" style="">ENG</text></svg>
<svg style="position:absolute;left:1754.50px;top:1024.10px;overflow:visible" width="66.4" height="24.6"><text x="0" y="18.895348837209305" font-size="18.895348837209305" fill="#ffffff" stroke="#ffffff" stroke-width="0.22" font-weight="400" textLength="65.4" lengthAdjust="spacingAndGlyphs" style="">8:28 PM</text></svg>
<svg style="position:absolute;left:1750.70px;top:1050.65px;overflow:visible" width="75.1" height="26.5"><text x="0" y="20.348837209302328" font-size="20.348837209302328" fill="#ffffff" stroke="#ffffff" stroke-width="0.22" font-weight="400" textLength="74.1" lengthAdjust="spacingAndGlyphs" style="">4/9/2023</text></svg>
<svg style="position:absolute;left:1858px;top:1038px;" width="25" height="25" viewBox="0 0 25 25"><path d="M0.5 0.5H24V19H12L10 23L8 19H0.5Z" fill="#fff"/><path d="M5 5.5H19M5 9.5H19M5 13.5H14" stroke="#1e1f27" stroke-width="1"/><circle cx="19.5" cy="19.5" r="6" fill="#1e1f27"/><path d="M17.5 15.5A4.5 4.5 0 1 0 23.8 20A3.6 3.6 0 0 1 17.5 15.5Z" fill="none" stroke="#fff" stroke-width="1.2"/></svg>
<div style="position:absolute;left:1912px;top:1020px;width:2px;height:60px;background:#7c7d84"></div>
<svg style="position:absolute;left:0;top:0" width="1920" height="210"><path d="M207.1 165.4H233.9L242.7 156.6V162L233.9 171.5H207.1Z" fill="#b4b4b4"/><path d="M233.9 165.4L242.7 156.6V162L233.9 171.5Z" fill="#a6a6a6"/><path d="M207.1 132.6L216.2 123.8H242.7L233.9 132.6Z" fill="#8ccbf7"/><rect x="207.1" y="132.6" width="26.8" height="31.1" fill="#69afe5"/><path d="M233.9 132.6L242.7 123.8V154.6L233.9 163.7Z" fill="#4a95d0"/><path d="M248.2 162.3V129" stroke="#2a2a2a" stroke-width="2.2"/><path d="M244.4 131.5L248.2 124.6L252 131.5Z" fill="#2a2a2a"/><path d="M270 143Q293.4 125 316.5 142.4L307.3 151.9Q293.4 140 278.9 151.2Z" fill="#8ccbf7"/><path d="M278.9 151.2Q293.4 140 307.3 151.9V165.4Q293.4 155 278.9 166.7Z" fill="#69afe5"/><path d="M270 143L278.9 151.2V166.7L270 158Z" fill="#4a95d0"/><path d="M307.3 152.5L316.8 144.2V157.5L307.3 166Z" fill="#fff" stroke="#555" stroke-width="1.6" stroke-linejoin="round"/><path d="M314.4 134.6Q297 120 276 132" fill="none" stroke="#333" stroke-width="1.6"/><path d="M270.7 135.5L275.5 127.8L279.2 134.6Z" fill="#333"/><path d="M335 132.8L343.9 124.1H382L373.5 132.8Z" fill="#f2f2f2"/><rect x="335" y="132.8" width="38.5" height="38.2" fill="#d9d9d9"/><path d="M373.5 132.8L382 124.1V162.5L373.5 171Z" fill="#c2c2c2"/><path d="M335 171V132.8L343.9 124.1H382V162.5L373.5 171Z M373.5 132.8L382 124.1" fill="none" stroke="#6a6a6a" stroke-width="1.8" stroke-linejoin="round"/><path d="M335 132.8H373.5V171" fill="none" stroke="#f8f8f8" stroke-width="0.8" opacity="0.0"/><circle cx="354.7" cy="151.2" r="12" fill="#f4f4f4" stroke="#777" stroke-width="1.4"/><path d="M352 141.2A10 10 0 1 0 364.4 152.8A9 9 0 0 1 352 141.2Z" fill="#62aae3"/><path d="M411 131.7H429M411 163.3H429M404.2 138.5V156" stroke="#666" stroke-width="1.7"/><rect x="400.2" y="127.8" width="8.2" height="8" fill="#fff" stroke="#666" stroke-width="1.7"/><rect x="430.4" y="126.9" width="10.4" height="9.7" fill="#62aae3"/><rect x="399.3" y="158" width="9.9" height="10.5" fill="#62aae3"/><rect x="430.4" y="158" width="10.4" height="10.5" fill="#62aae3"/><path d="M468 131Q472 126.4 480 126.4H496L503 133V152Q508 158 508 164Q506 171.4 497 171.4H474Q464 171.4 463.6 162V138Q464 133 468 131Z" fill="#a77fe2" stroke="#9a6fdb" stroke-width="1"/><path d="M466 140Q470 130 482 129H494L497 133L484 134Q472 135 468 142Z" fill="#d6bdf7" opacity="0.9"/><path d="M480 128V171M464 154H498" stroke="#8d62cf" stroke-width="1.1"/><path d="M498 154Q500 147 506 146V166Q502 170 498 168Z" fill="#8b5fd0"/><path d="M498.70,123.50 L500.69,131.20 L507.54,127.16 L503.50,134.01 L511.20,136.00 L503.50,137.99 L507.54,144.84 L500.69,140.80 L498.70,148.50 L496.71,140.80 L489.86,144.84 L493.90,137.99 L486.20,136.00 L493.90,134.01 L489.86,127.16 L496.71,131.20Z" fill="#f5a300"/><path d="M581 129Q583 139 592 144Q598 147 600 144Q606 140 614 135L618 139Q610 143 606 149Q600 156 600 160L592 160Q592 155 588 149Q582 140 577 133Z" fill="#5ba5e0"/><path d="M590.5 145.5Q596 148.5 602 145.5L596 156Z" fill="#f1f1f1"/><circle cx="596.1" cy="163.2" r="8.8" fill="#5ba5e0"/><circle cx="596.1" cy="163.2" r="6.3" fill="#eee" stroke="#555" stroke-width="1.3"/><path d="M596.1 160.5V165.9M593.4 163.2H598.8" stroke="#777" stroke-width="0.9"/><circle cx="596.1" cy="163.2" r="3.2" fill="none" stroke="#777" stroke-width="0.8"/><rect x="575.4" y="124.3" width="9" height="9" fill="#f4f4f4" stroke="#555" stroke-width="1.5"/><circle cx="614.5" cy="135.5" r="7" fill="#5ba5e0"/><path d="M615.5 127.3L621.5 136L615.5 140.5L609 138.3L609.3 131Z" fill="#f4f4f4" stroke="#555" stroke-width="1.5" stroke-linejoin="round"/><path d="M696.2 171.1H687.4V132.6L696.2 124H703.3" fill="#d9d9d9" stroke="#666" stroke-width="1.6"/><path d="M687.4 171.1V132.6L696.2 124H703.3V171.1Z" fill="#d9d9d9"/><path d="M687.4 171.1H696.2M687.4 171.1V132.6L696.2 124H703.3" fill="none" stroke="#666" stroke-width="1.6"/><path d="M698 132.6L706.8 124H719.7L710.8 132.6Z" fill="#8ccbf7"/><rect x="698" y="132.6" width="12.8" height="38.5" fill="#69afe5"/><path d="M710.8 132.6L719.7 124V162.3L710.8 171.1Z" fill="#4a95d0"/><path d="M716.5 146.8H724.5" stroke="#fff" stroke-width="3.6"/><path d="M716.5 146.8H725" stroke="#2a2a2a" stroke-width="1.8"/><path d="M723.5 142.8L730.3 146.8L723.5 150.8Z" fill="#2a2a2a"/><path d="M749.8 171.8V135.5L761.4 123.1H775Q790 124 797.7 143.4V158L783.5 171.8Z" fill="#d9d9d9"/><path d="M783.5 171.8V150L797.7 140V158Z" fill="#c2c2c2"/><path d="M768 123.1Q790 124 797.7 143.4L787.5 151Q786 136 771.5 136Z" fill="#62aae3"/><path d="M771.5 136Q786 136 787.5 151" fill="none" stroke="#f4f4f4" stroke-width="1.3"/><path d="M749.8 171.8V135.5L761.4 123.1H775Q790 124 797.7 143.4V158L783.5 171.8Z" fill="none" stroke="#6a6a6a" stroke-width="1.8" stroke-linejoin="round"/><path d="M814.5 135.5L826.9 123.1H862.3L850.8 135.5Z" fill="#f2f2f2"/><rect x="814.5" y="135.5" width="36.3" height="36.3" fill="#d9d9d9"/><path d="M850.8 135.5L862.3 123.1V159.4L850.8 171.8Z" fill="#c2c2c2"/><path d="M814.5 171.8V135.5L826.9 123.1H862.3V159.4L850.8 171.8Z M814.5 135.5H850.8V171.8M850.8 135.5L862.3 123.1" fill="none" stroke="#6a6a6a" stroke-width="1.8" stroke-linejoin="round"/><rect x="819.8" y="139.9" width="24.8" height="25.7" fill="#f4f4f4" stroke="#fff" stroke-width="1.2"/><path d="M821.5 141.5H832V156L821.5 164Z" fill="#3f8fcf"/><path d="M832 154.5H843V164H821.5Z" fill="#8cc8f5"/><path d="M879 145L885 138H912L906 145Z" fill="#8ccbf7"/><rect x="879" y="145" width="27" height="27" fill="#69afe5"/><path d="M906 145L912 138V165L906 172Z" fill="#4a95d0"/><path d="M895 130L901 123.1H927L921 130Z" fill="#8ccbf7"/><rect x="895" y="130" width="26.4" height="25.8" fill="#69afe5"/><path d="M921.4 130L927 123.1V149.6L921.4 155.8Z" fill="#4a95d0"/><rect x="895" y="145" width="11" height="11" fill="#69afe5"/><rect x="946.7" y="155" width="33.1" height="14.5" fill="#d9d9d9"/><path d="M979.8 155L987.9 148.6V162L979.8 169.5Z" fill="#c2c2c2"/><path d="M946.7 155V169.5H979.8L987.9 162V148.6M979.8 155V169.5" fill="none" stroke="#6a6a6a" stroke-width="1.7" stroke-linejoin="round"/><path d="M946.7 133.2L955.8 123.5H988.4L978.8 133.2Z" fill="#8ccbf7"/><rect x="946.7" y="133.2" width="32.1" height="13.8" fill="#69afe5"/><path d="M978.8 133.2L988.4 123.5V135.8L978.8 147Z" fill="#4a95d0"/><path d="M943.5 151.3H980.4L991.6 140.1" fill="none" stroke="#fff" stroke-width="4"/><path d="M943.5 151.3H980.4L991.6 140.1" fill="none" stroke="#2b95e8" stroke-width="1.5"/><rect x="1024.7" y="152.9" width="18.1" height="17.6" fill="#d9d9d9"/><path d="M1042.8 154L1047.1 148.1H1065.8L1060.5 154Z" fill="#f2f2f2"/><rect x="1042.8" y="154" width="17.7" height="16.5" fill="#d9d9d9"/><path d="M1060.5 154L1065.8 148.1V164.6L1060.5 170.5Z" fill="#c2c2c2"/><path d="M1024.7 152.9V170.5H1060.5L1065.8 164.6V148.1H1047.1L1042.8 153V170.5M1060.5 154V170.5M1060.5 154L1065.8 148.1" fill="none" stroke="#6a6a6a" stroke-width="1.6" stroke-linejoin="round"/><path d="M1024.7 135.8L1029.5 130H1048.2L1042.8 135.8Z" fill="#8ccbf7"/><rect x="1024.7" y="135.8" width="18.1" height="17.1" fill="#69afe5"/><path d="M1042.8 135.8L1048.2 130V147L1042.8 152.9Z" fill="#4a95d0"/><path d="M1059.40,124.20 L1061.39,131.60 L1068.03,127.77 L1064.20,134.41 L1071.60,136.40 L1064.20,138.39 L1068.03,145.03 L1061.39,141.20 L1059.40,148.60 L1057.41,141.20 L1050.77,145.03 L1054.60,138.39 L1047.20,136.40 L1054.60,134.41 L1050.77,127.77 L1057.41,131.60Z" fill="#f5a300"/><path d="M1092.5 138L1101.6 128.3H1106V157.7L1092.5 166.2Z" fill="#d8d8d8" stroke="#666" stroke-width="1.6" stroke-linejoin="round"/><path d="M1101.6 128.3Q1101.6 126.7 1106 126.7Q1110.6 126.7 1110.6 128.3V143Q1110.6 144.9 1106 144.9Q1103.7 144.9 1103.7 143" fill="#e4e4e4" stroke="#666" stroke-width="1.5"/><ellipse cx="1106.1" cy="128.5" rx="2.2" ry="1" fill="#999"/><path d="M1106.4 146V153" stroke="#2b95e8" stroke-width="1.4"/><path d="M1122.4 130L1133.6 139V167.3L1122.4 158.2Z" fill="#dcdcdc" stroke="#666" stroke-width="1.6" stroke-linejoin="round"/><path d="M1122.4 142Q1122.4 140.6 1118.6 140.6Q1114.9 140.6 1114.9 142V156.5Q1114.9 158.2 1118.6 158.2Q1122.4 158.2 1122.4 156.5Z" fill="#d0d0d0" stroke="#666" stroke-width="1.5"/><ellipse cx="1118.6" cy="142" rx="3.2" ry="1.2" fill="#eee"/><path d="M1119.7 135.8V143.8" stroke="#2b95e8" stroke-width="1.4"/><path d="M1205 169.5V137L1218 123.2H1227" fill="none" stroke="#666" stroke-width="1.7"/><path d="M1205 137H1217V169.5H1205Z" fill="#dadada"/><path d="M1205 169.5H1217" stroke="#666" stroke-width="1.7"/><path d="M1205 169.5V137" stroke="#666" stroke-width="1.7"/><path d="M1218 137L1231 123.5V155.5L1218 169.5Z" fill="#54c27b"/><path d="M1236.5 137L1249.4 123.5V155.5L1236.5 169.5Z" fill="#e39a62"/><path d="M1340 135.5V151M1381 135.5V151" stroke="#555" stroke-width="1.3"/><path d="M1341 142.5H1380" stroke="#555" stroke-width="1.3"/><path d="M1340.5 142.5L1346 139V146Z M1380.5 142.5L1375 139V146Z" fill="#555"/><rect x="1339.2" y="150.8" width="42.2" height="8.6" fill="#f6a300"/><rect x="1342.3" y="150.8" width="1.1" height="3.2" fill="#7a5200"/><rect x="1347.4" y="150.8" width="1.1" height="2.2" fill="#7a5200"/><rect x="1352.5" y="150.8" width="1.1" height="3.2" fill="#7a5200"/><rect x="1357.6" y="150.8" width="1.1" height="2.2" fill="#7a5200"/><rect x="1362.7" y="150.8" width="1.1" height="3.2" fill="#7a5200"/><rect x="1367.8" y="150.8" width="1.1" height="2.2" fill="#7a5200"/><rect x="1372.9" y="150.8" width="1.1" height="3.2" fill="#7a5200"/><rect x="1378.0" y="150.8" width="1.1" height="2.2" fill="#7a5200"/><rect x="1449" y="124.8" width="43.4" height="43.4" fill="#84c6f8" stroke="#4a95d0" stroke-width="1"/><path d="M1449 168.2V146Q1456 139 1462 143Q1469 148 1474 157Q1479 151 1484 153Q1489 155 1492.4 160V168.2Z" fill="#4a95d0"/><circle cx="1480.4" cy="137.3" r="3.6" fill="#fafab4"/><rect x="1556.5" y="125" width="40" height="31" fill="none" stroke="#2fb44a" stroke-width="1.5" stroke-dasharray="4 2.6"/><path d="M1587.3 145.2V167L1591.5 163L1595.5 171.5L1598.5 170.2L1594.8 162H1602Z" fill="#fff" stroke="#333" stroke-width="1.2" stroke-linejoin="round"/></svg>
<svg style="position:absolute;left:0;top:0" width="1920" height="83"><g fill="#6a6a6a"><rect x="13.5" y="48.2" width="6.3" height="6.2" rx="0.8"/><rect x="13.5" y="55.5" width="6.3" height="6.2" rx="0.8"/><rect x="13.5" y="62.8" width="6.3" height="6.2" rx="0.8"/><rect x="21.0" y="48.2" width="6.3" height="6.2" rx="0.8"/><rect x="21.0" y="55.5" width="6.3" height="6.2" rx="0.8"/><rect x="21.0" y="62.8" width="6.3" height="6.2" rx="0.8"/><rect x="28.5" y="48.2" width="6.3" height="6.2" rx="0.8"/><rect x="28.5" y="55.5" width="6.3" height="6.2" rx="0.8"/><rect x="28.5" y="62.8" width="6.3" height="6.2" rx="0.8"/></g><path d="M63.5 48.5Q63 47 65 47H76L82.5 53.5V69.5Q82.5 71 81 71H65Q63.5 71 63.5 69.5Z" fill="#6a6a6a"/><path d="M76.5 47V53H82.5" fill="none" stroke="#cbcbcb" stroke-width="1.3"/><path d="M91 54.5H102L96.5 62Z" fill="#6a6a6a"/><path d="M130.5 50Q130.5 48.5 132 48.5H149.5Q151.3 48.5 151.3 50.3V68Q151.3 69.5 149.8 69.5H133.5L130.5 66.5Z" fill="#6a6a6a"/><path d="M135.5 48.5V55.3H146.5V48.5" fill="none" stroke="#cbcbcb" stroke-width="1.7"/><path d="M136 69.5V63H146V69.5" fill="none" stroke="#cbcbcb" stroke-width="1.7"/><path d="M198.3 67.5Q199 57 186 57" fill="none" stroke="#6a6a6a" stroke-width="2.6"/><path d="M188 50.6L180.5 57.5L188 64.5" fill="none" stroke="#6a6a6a" stroke-width="2.6"/><path d="M210 54.6H220.4L215.2 62Z" fill="#6a6a6a"/><path d="M240.5 67.5Q240 57 253 57" fill="none" stroke="#8c8c8c" stroke-width="2.6"/><path d="M251 50.6L258.5 57.5L251 64.5" fill="none" stroke="#8c8c8c" stroke-width="2.6"/><path d="M268.4 54.6H278.6L273.5 62Z" fill="#8c8c8c"/><path d="M308.4 62.5L319.2 52.6L330 62.5H327.5V72.2H322V66H316.5V72.2H311V62.5Z" fill="#6a6a6a"/><rect x="324.5" y="53.5" width="3" height="6" fill="#6a6a6a"/><path d="M900 50L910.8 55.5V67.5L900 73.4L889.2 67.5V55.5Z" fill="#ff8a2a"/><path d="M889.2 55.5L900 50L910.8 55.5L900 61Z" fill="#ffc08a"/><path d="M900 61L910.8 55.5V67.5L900 73.4Z" fill="#ff6a00"/><path d="M889.2 55.5L900 61V73.4L889.2 67.5Z" fill="#ff9440"/><path d="M1550.3 55.3L1563.5 68.5M1563.5 55.3L1550.3 68.5" stroke="#6a6a6a" stroke-width="1.6"/><path d="M1601 51.3V71.6M1591 61.5H1611" stroke="#6a6a6a" stroke-width="4.2"/><circle cx="1651.25" cy="58.75" r="11.8" fill="#6a6a6a"/><g transform="rotate(-45 1651.25 58.75)" fill="#cbcbcb"><rect x="1645.5" y="55" width="10" height="9" rx="2.5"/><rect x="1655" y="55.8" width="5" height="2.2"/><rect x="1655" y="61" width="5" height="2.2"/><rect x="1636" y="58" width="10" height="3.2"/></g><path d="M1643 71L1641 66" stroke="#cbcbcb" stroke-width="2.5"/><circle cx="1700.6" cy="59" r="11.7" fill="none" stroke="#6a6a6a" stroke-width="1.3"/><circle cx="1700.6" cy="59" r="9.5" fill="#6a6a6a"/><path d="M1700.6 52.5V60H1706.5" fill="none" stroke="#e0e0e0" stroke-width="1.6"/><path d="M1764.6 70Q1768 66 1768 60Q1768 50.5 1775.3 49Q1782.5 50.5 1782.5 60Q1782.5 66 1786 70Z" fill="#6a6a6a"/><path d="M1772 71Q1775.3 74.5 1778.5 71Z" fill="#6a6a6a"/><circle cx="1781" cy="52.9" r="4.3" fill="#1a94e6"/><circle cx="1824" cy="59" r="12" fill="#6a6a6a"/><path d="M1819.5 55.5Q1819.5 50.5 1824 50.5Q1828.8 50.5 1828.8 55Q1828.8 57.8 1825.5 59.5Q1824 60.3 1824 63" fill="none" stroke="#cbcbcb" stroke-width="3"/><rect x="1822.3" y="64.8" width="3.4" height="3.4" fill="#cbcbcb"/><defs><linearGradient id="avg" x1="0" y1="0" x2="0" y2="1"><stop offset="0" stop-color="#8fa3bf"/><stop offset="1" stop-color="#b7c6da"/></linearGradient><clipPath id="avc"><circle cx="1882.3" cy="59.3" r="18.3"/></clipPath></defs><circle cx="1882.3" cy="59.3" r="18.3" fill="url(#avg)"/><g clip-path="url(#avc)"><path d="M1866 80Q1867 68 1876 66Q1874 61 1874 55Q1875 45 1883 45Q1891 46 1891 55Q1891 62 1888 66Q1898 68 1900 80Z" fill="#56657a"/></g><path d="M4 8Q4 5 7 5H21L25 9V27Q25 29 23 29H8L4 26Z" fill="#e4661c"/><path d="M3 8Q3 5.5 5.5 5.5H20Q23 5.5 23 8V22H3Z" fill="#ff7a1a"/><path d="M3 8Q3 5.5 5.5 5.5H7V22H3Z" fill="#ff9a45"/><rect x="5.5" y="22" width="19" height="6.8" fill="#a83f0e"/><path d="M11 9.5H18.5V12H14V14H18V16.5H14V20H11Z" fill="#fff"/></svg>
<svg style="position:absolute;left:1718px;top:52px;" width="9" height="14" viewBox="0 0 9 14"><path d="M1.2 3.2L5.2 0.8H6.7V13.2H5V3.1L1.8 5Z" fill="#4a3f5a"/></svg>
</body></html>
